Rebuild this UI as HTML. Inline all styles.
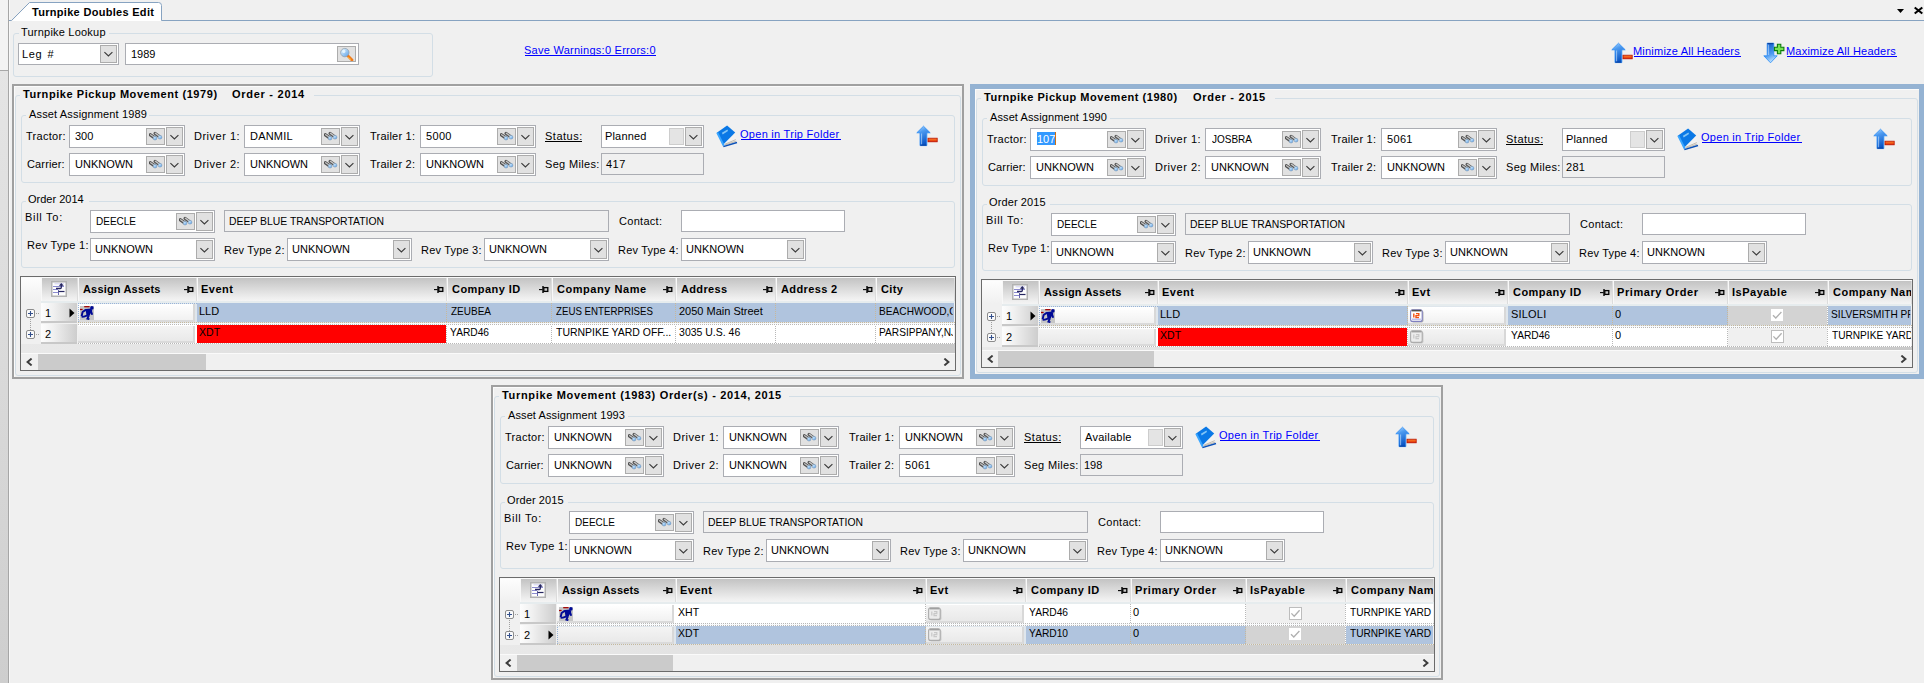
<!DOCTYPE html>
<html><head><meta charset="utf-8"><title>Turnpike Doubles Edit</title><style>
html,body{margin:0;padding:0;width:1924px;height:683px;overflow:hidden;background:#f0f0f0}
body{position:relative;font-family:'Liberation Sans', sans-serif;font-size:11px;line-height:13px;color:#000}
div,svg{position:absolute}
.t{white-space:nowrap}
</style></head><body><svg width="0" height="0" style="position:absolute;left:0;top:0">
<defs>
<linearGradient id="gblue" x1="0" y1="0" x2="0.3" y2="1"><stop offset="0" stop-color="#b4dcff"/><stop offset="0.35" stop-color="#4c9af0"/><stop offset="1" stop-color="#0a54c4"/></linearGradient><linearGradient id="gblued" x1="0.3" y1="1" x2="0" y2="0"><stop offset="0" stop-color="#b4dcff"/><stop offset="0.35" stop-color="#4c9af0"/><stop offset="1" stop-color="#0a54c4"/></linearGradient>
<linearGradient id="gbluev" x1="0" y1="0" x2="0" y2="1"><stop offset="0" stop-color="#8cc4f8"/><stop offset="1" stop-color="#0a58c0"/></linearGradient>
<linearGradient id="gred" x1="0" y1="0" x2="0" y2="1"><stop offset="0" stop-color="#ff8a30"/><stop offset="1" stop-color="#e02800"/></linearGradient>
<linearGradient id="glens" x1="0" y1="0" x2="1" y2="1"><stop offset="0" stop-color="#eaf8ff"/><stop offset="1" stop-color="#5aa0e8"/></linearGradient>
</defs></svg>

<div style="left:0px;top:0px;width:8px;height:70px;background:#f3f3f3"></div>
<div style="left:0px;top:70px;width:8px;height:1px;background:#a8a8a8"></div>
<div style="left:0px;top:71px;width:8px;height:612px;background:linear-gradient(#e5e5e5,#cecece)"></div>
<div style="left:8px;top:0px;width:1px;height:683px;background:#a6a6a6"></div>
<div style="left:9px;top:0px;width:1px;height:683px;background:#f8f8f8"></div>
<svg style="left:0;top:0" width="1924" height="24">
<path d="M9 21 H12 L30 2.5 H158.5 Q161.5 2.5 161.5 5.5 V21 Z" fill="#fff"/>
<path d="M9 20.5 H11.5 L29.5 2.5 H158.5 Q161.5 2.5 161.5 5.5 V20.5 H1924" fill="none" stroke="#87a3c1" stroke-width="1"/>
<path d="M1897 9 H1904 L1900.5 13 Z" fill="#000"/>
<path d="M1914.7 7.5 L1922.3 13.5 M1922.3 7.5 L1914.7 13.5" stroke="#000" stroke-width="2.1"/>
</svg>
<div class="t" style="left:32px;top:6px;font-weight:bold;letter-spacing:0.300px;">Turnpike Doubles Edit</div>
<div style="left:13px;top:33px;width:420px;height:44px;border:1px solid #d3dee6;border-radius:3px;box-sizing:border-box"></div>
<div style="left:19px;top:32px;width:90px;height:3px;background:#f0f0f0"></div>
<div class="t" style="left:21px;top:26px;letter-spacing:0.214px;">Turnpike Lookup</div>
<div style="left:18px;top:43px;width:101px;height:22px;background:#fff;border:1px solid #abadb3;box-sizing:border-box"></div>
<div style="left:100px;top:45px;width:17px;height:18px;background:#e1e1e1;border:1px solid #acacac;box-sizing:border-box"></div>
<svg style="left:104px;top:51px" width="10" height="7" viewBox="0 0 10 7"><path d="M0.4 1.1 L4.4 5 L8.4 1.1" fill="none" stroke="#3a3a3a" stroke-width="1.15"/></svg>
<div class="t" style="left:22px;top:48px;letter-spacing:0.625px;word-spacing:1.5px;">Leg #</div>
<div style="left:125px;top:43px;width:234px;height:22px;background:#fff;border:1px solid #abadb3;box-sizing:border-box"></div>
<div class="t" style="left:131px;top:48px;">1989</div>
<div style="left:337px;top:46px;width:19px;height:16px;background:#e1e1e1;border:1px solid #acacac;box-sizing:border-box"></div>
<svg style="left:339px;top:47px" width="15" height="14" viewBox="0 0 15 14"><path d="M8.8 8.8 L13 13" stroke="#f07a1a" stroke-width="2.8" stroke-linecap="round"/><path d="M9.2 10.4 L12 12.6" stroke="#ffd040" stroke-width="0.8"/><circle cx="5.8" cy="5.6" r="4.2" fill="url(#glens)" stroke="#8a9aa8" stroke-width="0.7"/><circle cx="4.8" cy="4.4" r="1.6" fill="#f0fbff" opacity="0.8"/></svg>
<div class="t" style="left:524px;top:44px;color:#0000ff;letter-spacing:0.261px;">Save Warnings:0 Errors:0</div>
<div style="left:525px;top:55px;width:131px;height:1px;background:#0000ff"></div>
<svg style="left:1610px;top:42px" width="24" height="22" viewBox="0 0 24 22"><path d="M8.5 1.2 L15.2 7.8 H11.8 V20.6 H5 V7.8 H1.8 Z" fill="url(#gblue)" stroke="#2a8cf6" stroke-width="0.8"/><path d="M6.6 8.5 V19.5" stroke="#c8e4ff" stroke-width="0.9" opacity="0.7"/><path d="M5.4 20.2 H11.4" stroke="#0840a0" stroke-width="1.1"/><rect x="13" y="13.2" width="9.2" height="3.6" fill="url(#gred)" stroke="#b81000" stroke-width="0.8"/></svg>
<div class="t" style="left:1633px;top:45px;color:#0000ff;letter-spacing:0.211px;">Minimize All Headers</div>
<div style="left:1634px;top:56px;width:107px;height:1px;background:#0000ff"></div>
<svg style="left:1762px;top:42px" width="24" height="22" viewBox="0 0 24 22"><path d="M5.2 1.2 H11.8 V13.8 H15.2 L8.5 20.8 L1.8 13.8 H5.2 Z" fill="url(#gblued)" stroke="#2a8cf6" stroke-width="0.8"/><path d="M6.6 2.5 V13" stroke="#c8e4ff" stroke-width="0.9" opacity="0.7"/><path d="M5.4 1.6 H11.4" stroke="#0840a0" stroke-width="1.1"/><path d="M15.4 2.2 H18.8 V5.2 H21.9 V8.6 H18.8 V11.7 H15.4 V8.6 H12.4 V5.2 H15.4 Z" fill="#78e254" stroke="#0a7c0a" stroke-width="1.1"/></svg>
<div class="t" style="left:1786px;top:45px;color:#0000ff;letter-spacing:0.211px;">Maximize All Headers</div>
<div style="left:1787px;top:56px;width:110px;height:1px;background:#0000ff"></div>
<div style="left:12px;top:84px;width:952px;height:295px;border:2px solid #a0a0a0;box-sizing:border-box"></div>
<div style="left:14px;top:86px;width:948px;height:291px;border-left:1px solid #fbfbfb;border-top:1px solid #fbfbfb;box-sizing:border-box"></div>
<div style="left:15px;top:95px;width:946px;height:281px;border:1px solid #d3dee6;border-radius:3px;box-sizing:border-box"></div>
<div style="left:20px;top:94px;width:294px;height:3px;background:#f0f0f0"></div>
<div class="t" style="left:23px;top:88px;font-weight:bold;letter-spacing:0.567px;">Turnpike Pickup Movement (1979)</div>
<div class="t" style="left:232px;top:88px;font-weight:bold;letter-spacing:0.727px;">Order - 2014</div>
<div style="left:21px;top:115px;width:934px;height:68px;border:1px solid #d3dee6;border-radius:3px;box-sizing:border-box"></div>
<div style="left:26px;top:114px;width:123px;height:3px;background:#f0f0f0"></div>
<div class="t" style="left:29px;top:108px;letter-spacing:0.150px;">Asset Assignment 1989</div>
<div class="t" style="left:26px;top:130px;letter-spacing:0.286px;">Tractor:</div>
<div style="left:69px;top:125px;width:116px;height:23px;background:#fff;border:1px solid #abadb3;box-sizing:border-box"></div>
<div style="left:166px;top:127px;width:17px;height:19px;background:#e1e1e1;border:1px solid #acacac;box-sizing:border-box"></div>
<svg style="left:170px;top:134px" width="10" height="7" viewBox="0 0 10 7"><path d="M0.4 1.1 L4.4 5 L8.4 1.1" fill="none" stroke="#3a3a3a" stroke-width="1.15"/></svg>
<div style="left:146px;top:128px;width:19px;height:17px;background:#e1e1e1;border:1px solid #acacac;box-sizing:border-box"></div>
<svg style="left:149px;top:131px" width="14" height="11" viewBox="0 0 14 11"><path d="M1.4 3.8 L5.4 6.6" stroke="#505050" stroke-width="3.3" stroke-linecap="round"/><path d="M6.1 2.5 L10.3 5.5" stroke="#585858" stroke-width="3.3" stroke-linecap="round"/><path d="M1.6 3.7 L5 6.1" stroke="#c4c4c4" stroke-width="1.2" stroke-linecap="round"/><path d="M6.4 2.3 L9.8 4.8" stroke="#cccccc" stroke-width="1.2" stroke-linecap="round"/><circle cx="6" cy="7.1" r="1.9" fill="url(#glens)" stroke="#6a8cae" stroke-width="0.5"/><circle cx="11" cy="6.2" r="1.9" fill="url(#glens)" stroke="#6a8cae" stroke-width="0.5"/></svg>
<div class="t" style="left:75px;top:130px;">300</div>
<div class="t" style="left:194px;top:130px;letter-spacing:0.500px;">Driver 1:</div>
<div style="left:244px;top:125px;width:116px;height:23px;background:#fff;border:1px solid #abadb3;box-sizing:border-box"></div>
<div style="left:341px;top:127px;width:17px;height:19px;background:#e1e1e1;border:1px solid #acacac;box-sizing:border-box"></div>
<svg style="left:345px;top:134px" width="10" height="7" viewBox="0 0 10 7"><path d="M0.4 1.1 L4.4 5 L8.4 1.1" fill="none" stroke="#3a3a3a" stroke-width="1.15"/></svg>
<div style="left:321px;top:128px;width:19px;height:17px;background:#e1e1e1;border:1px solid #acacac;box-sizing:border-box"></div>
<svg style="left:324px;top:131px" width="14" height="11" viewBox="0 0 14 11"><path d="M1.4 3.8 L5.4 6.6" stroke="#505050" stroke-width="3.3" stroke-linecap="round"/><path d="M6.1 2.5 L10.3 5.5" stroke="#585858" stroke-width="3.3" stroke-linecap="round"/><path d="M1.6 3.7 L5 6.1" stroke="#c4c4c4" stroke-width="1.2" stroke-linecap="round"/><path d="M6.4 2.3 L9.8 4.8" stroke="#cccccc" stroke-width="1.2" stroke-linecap="round"/><circle cx="6" cy="7.1" r="1.9" fill="url(#glens)" stroke="#6a8cae" stroke-width="0.5"/><circle cx="11" cy="6.2" r="1.9" fill="url(#glens)" stroke="#6a8cae" stroke-width="0.5"/></svg>
<div class="t" style="left:250px;top:130px;letter-spacing:0.200px;">DANMIL</div>
<div class="t" style="left:370px;top:130px;letter-spacing:0.222px;">Trailer 1:</div>
<div style="left:420px;top:125px;width:116px;height:23px;background:#fff;border:1px solid #abadb3;box-sizing:border-box"></div>
<div style="left:517px;top:127px;width:17px;height:19px;background:#e1e1e1;border:1px solid #acacac;box-sizing:border-box"></div>
<svg style="left:521px;top:134px" width="10" height="7" viewBox="0 0 10 7"><path d="M0.4 1.1 L4.4 5 L8.4 1.1" fill="none" stroke="#3a3a3a" stroke-width="1.15"/></svg>
<div style="left:497px;top:128px;width:19px;height:17px;background:#e1e1e1;border:1px solid #acacac;box-sizing:border-box"></div>
<svg style="left:500px;top:131px" width="14" height="11" viewBox="0 0 14 11"><path d="M1.4 3.8 L5.4 6.6" stroke="#505050" stroke-width="3.3" stroke-linecap="round"/><path d="M6.1 2.5 L10.3 5.5" stroke="#585858" stroke-width="3.3" stroke-linecap="round"/><path d="M1.6 3.7 L5 6.1" stroke="#c4c4c4" stroke-width="1.2" stroke-linecap="round"/><path d="M6.4 2.3 L9.8 4.8" stroke="#cccccc" stroke-width="1.2" stroke-linecap="round"/><circle cx="6" cy="7.1" r="1.9" fill="url(#glens)" stroke="#6a8cae" stroke-width="0.5"/><circle cx="11" cy="6.2" r="1.9" fill="url(#glens)" stroke="#6a8cae" stroke-width="0.5"/></svg>
<div class="t" style="left:426px;top:130px;letter-spacing:0.333px;">5000</div>
<div class="t" style="left:545px;top:130px;letter-spacing:0.500px;">Status:</div>
<div style="left:545px;top:141px;width:37px;height:1px;background:#000"></div>
<div style="left:601px;top:125px;width:103px;height:23px;background:#fff;border:1px solid #abadb3;box-sizing:border-box"></div>
<div style="left:685px;top:127px;width:17px;height:19px;background:#e1e1e1;border:1px solid #acacac;box-sizing:border-box"></div>
<svg style="left:689px;top:134px" width="10" height="7" viewBox="0 0 10 7"><path d="M0.4 1.1 L4.4 5 L8.4 1.1" fill="none" stroke="#3a3a3a" stroke-width="1.15"/></svg>
<div style="left:669px;top:128px;width:15px;height:17px;background:#e4e4e4;border:1px solid #cdcdcd;box-sizing:border-box"></div>
<div class="t" style="left:605px;top:130px;letter-spacing:0.167px;">Planned</div>
<svg style="left:715px;top:125px" width="24" height="23" viewBox="0 0 24 23"><path d="M8.4 21.4 L21.8 17.3 L21 13.6 L20 7.5 L8.2 19.4 Z" fill="#f2f2f2"/><path d="M9.5 20.2 L21.2 16.2 M10 19.2 L20.8 14.6" stroke="#b4aca0" stroke-width="0.8"/><path d="M1.8 7.7 L12.1 0.4 L20.2 7.5 L8.3 19.6 Z" fill="#0a78e6"/><path d="M2.2 7.6 L8.8 20.8" stroke="#3aa6ff" stroke-width="2"/><path d="M8.4 21.6 L22 17.5" stroke="#0a50b8" stroke-width="1.4"/><path d="M6.9 7.7 L12.4 4.4 L13 6 L7.7 9.5 Z" fill="#80c4f6"/></svg>
<div class="t" style="left:740px;top:128px;color:#0000ff;letter-spacing:0.278px;">Open in Trip Folder</div>
<div style="left:741px;top:139px;width:100px;height:1px;background:#0000ff"></div>
<svg style="left:915px;top:125px" width="24" height="22" viewBox="0 0 24 22"><path d="M8.5 1.2 L15.2 7.8 H11.8 V20.6 H5 V7.8 H1.8 Z" fill="url(#gblue)" stroke="#2a8cf6" stroke-width="0.8"/><path d="M6.6 8.5 V19.5" stroke="#c8e4ff" stroke-width="0.9" opacity="0.7"/><path d="M5.4 20.2 H11.4" stroke="#0840a0" stroke-width="1.1"/><rect x="13" y="13.2" width="9.2" height="3.6" fill="url(#gred)" stroke="#b81000" stroke-width="0.8"/></svg>
<div class="t" style="left:27px;top:158px;letter-spacing:0.143px;">Carrier:</div>
<div style="left:69px;top:153px;width:116px;height:23px;background:#fff;border:1px solid #abadb3;box-sizing:border-box"></div>
<div style="left:166px;top:155px;width:17px;height:19px;background:#e1e1e1;border:1px solid #acacac;box-sizing:border-box"></div>
<svg style="left:170px;top:162px" width="10" height="7" viewBox="0 0 10 7"><path d="M0.4 1.1 L4.4 5 L8.4 1.1" fill="none" stroke="#3a3a3a" stroke-width="1.15"/></svg>
<div style="left:146px;top:156px;width:19px;height:17px;background:#e1e1e1;border:1px solid #acacac;box-sizing:border-box"></div>
<svg style="left:149px;top:159px" width="14" height="11" viewBox="0 0 14 11"><path d="M1.4 3.8 L5.4 6.6" stroke="#505050" stroke-width="3.3" stroke-linecap="round"/><path d="M6.1 2.5 L10.3 5.5" stroke="#585858" stroke-width="3.3" stroke-linecap="round"/><path d="M1.6 3.7 L5 6.1" stroke="#c4c4c4" stroke-width="1.2" stroke-linecap="round"/><path d="M6.4 2.3 L9.8 4.8" stroke="#cccccc" stroke-width="1.2" stroke-linecap="round"/><circle cx="6" cy="7.1" r="1.9" fill="url(#glens)" stroke="#6a8cae" stroke-width="0.5"/><circle cx="11" cy="6.2" r="1.9" fill="url(#glens)" stroke="#6a8cae" stroke-width="0.5"/></svg>
<div class="t" style="left:75px;top:158px;">UNKNOWN</div>
<div class="t" style="left:194px;top:158px;letter-spacing:0.500px;">Driver 2:</div>
<div style="left:244px;top:153px;width:116px;height:23px;background:#fff;border:1px solid #abadb3;box-sizing:border-box"></div>
<div style="left:341px;top:155px;width:17px;height:19px;background:#e1e1e1;border:1px solid #acacac;box-sizing:border-box"></div>
<svg style="left:345px;top:162px" width="10" height="7" viewBox="0 0 10 7"><path d="M0.4 1.1 L4.4 5 L8.4 1.1" fill="none" stroke="#3a3a3a" stroke-width="1.15"/></svg>
<div style="left:321px;top:156px;width:19px;height:17px;background:#e1e1e1;border:1px solid #acacac;box-sizing:border-box"></div>
<svg style="left:324px;top:159px" width="14" height="11" viewBox="0 0 14 11"><path d="M1.4 3.8 L5.4 6.6" stroke="#505050" stroke-width="3.3" stroke-linecap="round"/><path d="M6.1 2.5 L10.3 5.5" stroke="#585858" stroke-width="3.3" stroke-linecap="round"/><path d="M1.6 3.7 L5 6.1" stroke="#c4c4c4" stroke-width="1.2" stroke-linecap="round"/><path d="M6.4 2.3 L9.8 4.8" stroke="#cccccc" stroke-width="1.2" stroke-linecap="round"/><circle cx="6" cy="7.1" r="1.9" fill="url(#glens)" stroke="#6a8cae" stroke-width="0.5"/><circle cx="11" cy="6.2" r="1.9" fill="url(#glens)" stroke="#6a8cae" stroke-width="0.5"/></svg>
<div class="t" style="left:250px;top:158px;">UNKNOWN</div>
<div class="t" style="left:370px;top:158px;letter-spacing:0.222px;">Trailer 2:</div>
<div style="left:420px;top:153px;width:116px;height:23px;background:#fff;border:1px solid #abadb3;box-sizing:border-box"></div>
<div style="left:517px;top:155px;width:17px;height:19px;background:#e1e1e1;border:1px solid #acacac;box-sizing:border-box"></div>
<svg style="left:521px;top:162px" width="10" height="7" viewBox="0 0 10 7"><path d="M0.4 1.1 L4.4 5 L8.4 1.1" fill="none" stroke="#3a3a3a" stroke-width="1.15"/></svg>
<div style="left:497px;top:156px;width:19px;height:17px;background:#e1e1e1;border:1px solid #acacac;box-sizing:border-box"></div>
<svg style="left:500px;top:159px" width="14" height="11" viewBox="0 0 14 11"><path d="M1.4 3.8 L5.4 6.6" stroke="#505050" stroke-width="3.3" stroke-linecap="round"/><path d="M6.1 2.5 L10.3 5.5" stroke="#585858" stroke-width="3.3" stroke-linecap="round"/><path d="M1.6 3.7 L5 6.1" stroke="#c4c4c4" stroke-width="1.2" stroke-linecap="round"/><path d="M6.4 2.3 L9.8 4.8" stroke="#cccccc" stroke-width="1.2" stroke-linecap="round"/><circle cx="6" cy="7.1" r="1.9" fill="url(#glens)" stroke="#6a8cae" stroke-width="0.5"/><circle cx="11" cy="6.2" r="1.9" fill="url(#glens)" stroke="#6a8cae" stroke-width="0.5"/></svg>
<div class="t" style="left:426px;top:158px;">UNKNOWN</div>
<div class="t" style="left:545px;top:158px;letter-spacing:0.333px;">Seg Miles:</div>
<div style="left:601px;top:153px;width:103px;height:22px;background:#f0f0f0;border:1px solid #abadb3;box-sizing:border-box"></div>
<div class="t" style="left:606px;top:158px;letter-spacing:0.500px;">417</div>
<div style="left:21px;top:201px;width:934px;height:67px;border:1px solid #d3dee6;border-radius:3px;box-sizing:border-box"></div>
<div style="left:26px;top:200px;width:63px;height:3px;background:#f0f0f0"></div>
<div class="t" style="left:28px;top:193px;">Order 2014</div>
<div class="t" style="left:25px;top:211px;letter-spacing:0.714px;">Bill To:</div>
<div style="left:90px;top:210px;width:125px;height:23px;background:#fff;border:1px solid #abadb3;box-sizing:border-box"></div>
<div style="left:196px;top:212px;width:17px;height:19px;background:#e1e1e1;border:1px solid #acacac;box-sizing:border-box"></div>
<svg style="left:200px;top:219px" width="10" height="7" viewBox="0 0 10 7"><path d="M0.4 1.1 L4.4 5 L8.4 1.1" fill="none" stroke="#3a3a3a" stroke-width="1.15"/></svg>
<div style="left:176px;top:213px;width:19px;height:17px;background:#e1e1e1;border:1px solid #acacac;box-sizing:border-box"></div>
<svg style="left:179px;top:216px" width="14" height="11" viewBox="0 0 14 11"><path d="M1.4 3.8 L5.4 6.6" stroke="#505050" stroke-width="3.3" stroke-linecap="round"/><path d="M6.1 2.5 L10.3 5.5" stroke="#585858" stroke-width="3.3" stroke-linecap="round"/><path d="M1.6 3.7 L5 6.1" stroke="#c4c4c4" stroke-width="1.2" stroke-linecap="round"/><path d="M6.4 2.3 L9.8 4.8" stroke="#cccccc" stroke-width="1.2" stroke-linecap="round"/><circle cx="6" cy="7.1" r="1.9" fill="url(#glens)" stroke="#6a8cae" stroke-width="0.5"/><circle cx="11" cy="6.2" r="1.9" fill="url(#glens)" stroke="#6a8cae" stroke-width="0.5"/></svg>
<div class="t" style="left:96px;top:215px;transform:scaleX(0.9070);transform-origin:1px 0;">DEECLE</div>
<div style="left:224px;top:210px;width:385px;height:22px;background:#f0f0f0;border:1px solid #abadb3;box-sizing:border-box"></div>
<div class="t" style="left:229px;top:215px;transform:scaleX(0.9444);transform-origin:1px 0;">DEEP BLUE TRANSPORTATION</div>
<div class="t" style="left:619px;top:215px;letter-spacing:0.286px;">Contact:</div>
<div style="left:681px;top:210px;width:164px;height:22px;background:#fff;border:1px solid #abadb3;box-sizing:border-box"></div>
<div class="t" style="left:27px;top:239px;letter-spacing:0.300px;">Rev Type 1:</div>
<div style="left:90px;top:238px;width:125px;height:23px;background:#fff;border:1px solid #abadb3;box-sizing:border-box"></div>
<div style="left:196px;top:240px;width:17px;height:19px;background:#e1e1e1;border:1px solid #acacac;box-sizing:border-box"></div>
<svg style="left:200px;top:247px" width="10" height="7" viewBox="0 0 10 7"><path d="M0.4 1.1 L4.4 5 L8.4 1.1" fill="none" stroke="#3a3a3a" stroke-width="1.15"/></svg>
<div class="t" style="left:95px;top:243px;">UNKNOWN</div>
<div class="t" style="left:224px;top:244px;letter-spacing:0.200px;">Rev Type 2:</div>
<div style="left:287px;top:238px;width:125px;height:23px;background:#fff;border:1px solid #abadb3;box-sizing:border-box"></div>
<div style="left:393px;top:240px;width:17px;height:19px;background:#e1e1e1;border:1px solid #acacac;box-sizing:border-box"></div>
<svg style="left:397px;top:247px" width="10" height="7" viewBox="0 0 10 7"><path d="M0.4 1.1 L4.4 5 L8.4 1.1" fill="none" stroke="#3a3a3a" stroke-width="1.15"/></svg>
<div class="t" style="left:292px;top:243px;">UNKNOWN</div>
<div class="t" style="left:421px;top:244px;letter-spacing:0.200px;">Rev Type 3:</div>
<div style="left:484px;top:238px;width:125px;height:23px;background:#fff;border:1px solid #abadb3;box-sizing:border-box"></div>
<div style="left:590px;top:240px;width:17px;height:19px;background:#e1e1e1;border:1px solid #acacac;box-sizing:border-box"></div>
<svg style="left:594px;top:247px" width="10" height="7" viewBox="0 0 10 7"><path d="M0.4 1.1 L4.4 5 L8.4 1.1" fill="none" stroke="#3a3a3a" stroke-width="1.15"/></svg>
<div class="t" style="left:489px;top:243px;">UNKNOWN</div>
<div class="t" style="left:618px;top:244px;letter-spacing:0.200px;">Rev Type 4:</div>
<div style="left:681px;top:238px;width:125px;height:23px;background:#fff;border:1px solid #abadb3;box-sizing:border-box"></div>
<div style="left:787px;top:240px;width:17px;height:19px;background:#e1e1e1;border:1px solid #acacac;box-sizing:border-box"></div>
<svg style="left:791px;top:247px" width="10" height="7" viewBox="0 0 10 7"><path d="M0.4 1.1 L4.4 5 L8.4 1.1" fill="none" stroke="#3a3a3a" stroke-width="1.15"/></svg>
<div class="t" style="left:686px;top:243px;">UNKNOWN</div>
<div style="left:20px;top:276px;width:936px;height:95px;border:1px solid #6b6b6b;box-sizing:border-box;background:#f0f0f0"></div>
<div style="left:21px;top:277px;width:934px;height:1px;background:#fafafa"></div>
<div style="left:21px;top:278px;width:20px;height:23px;background:linear-gradient(#fdfdfd,#f0f0f0)"></div>
<div style="left:41px;top:278px;width:37px;height:23px;background:linear-gradient(#c3c3c3,#eeeeee 85%,#f4f4f4);border-left:1px solid #f8f8f8;border-right:1px solid #dcdcdc;box-sizing:border-box"></div>
<svg style="left:51px;top:281px" width="16" height="16" viewBox="0 0 16 16"><rect x="0.75" y="0.75" width="14.5" height="14.5" fill="#fdfdfd" stroke="#b2b2b2" stroke-width="1.5"/><path d="M3.5 2.8 H13" stroke="#d0d0f0" stroke-width="1"/><path d="M2 5.5 H13 M2 8.5 H7 M2 11.5 H7" stroke="#8c8cd0" stroke-width="1"/><path d="M7.5 9 V14" stroke="#6a6ab0" stroke-width="1"/><path d="M7.5 10.5 H13.5" stroke="#262660" stroke-width="1.2"/><path d="M5 7.5 H9.3 Q10.3 7.5 10.3 6.5 V4" fill="none" stroke="#262660" stroke-width="1.3"/><path d="M7.8 4.8 L10.3 2 L12.8 4.8 Z" fill="#262660"/></svg>
<div style="left:78px;top:278px;width:119px;height:23px;background:linear-gradient(#c3c3c3,#eeeeee 85%,#f4f4f4);border-left:1px solid #f8f8f8;border-right:1px solid #dcdcdc;box-sizing:border-box"></div>
<div class="t" style="left:83px;top:283px;font-weight:bold;letter-spacing:0.167px;">Assign Assets</div>
<svg style="left:184px;top:286px" width="10" height="8" viewBox="0 0 10 8"><path d="M0 3.6 H3.6" stroke="#000" stroke-width="1.1"/><path d="M4 0 V7" stroke="#000" stroke-width="1.4"/><rect x="4.8" y="1.6" width="4" height="3.8" fill="#c8c8c8" stroke="#000" stroke-width="1.3"/></svg>
<div style="left:197px;top:278px;width:250px;height:23px;background:linear-gradient(#c3c3c3,#eeeeee 85%,#f4f4f4);border-left:1px solid #f8f8f8;border-right:1px solid #dcdcdc;box-sizing:border-box"></div>
<div class="t" style="left:201px;top:283px;font-weight:bold;letter-spacing:0.500px;">Event</div>
<svg style="left:434px;top:286px" width="10" height="8" viewBox="0 0 10 8"><path d="M0 3.6 H3.6" stroke="#000" stroke-width="1.1"/><path d="M4 0 V7" stroke="#000" stroke-width="1.4"/><rect x="4.8" y="1.6" width="4" height="3.8" fill="#c8c8c8" stroke="#000" stroke-width="1.3"/></svg>
<div style="left:447px;top:278px;width:105px;height:23px;background:linear-gradient(#c3c3c3,#eeeeee 85%,#f4f4f4);border-left:1px solid #f8f8f8;border-right:1px solid #dcdcdc;box-sizing:border-box"></div>
<div class="t" style="left:452px;top:283px;font-weight:bold;letter-spacing:0.444px;">Company ID</div>
<svg style="left:539px;top:286px" width="10" height="8" viewBox="0 0 10 8"><path d="M0 3.6 H3.6" stroke="#000" stroke-width="1.1"/><path d="M4 0 V7" stroke="#000" stroke-width="1.4"/><rect x="4.8" y="1.6" width="4" height="3.8" fill="#c8c8c8" stroke="#000" stroke-width="1.3"/></svg>
<div style="left:552px;top:278px;width:124px;height:23px;background:linear-gradient(#c3c3c3,#eeeeee 85%,#f4f4f4);border-left:1px solid #f8f8f8;border-right:1px solid #dcdcdc;box-sizing:border-box"></div>
<div class="t" style="left:557px;top:283px;font-weight:bold;letter-spacing:0.545px;">Company Name</div>
<svg style="left:663px;top:286px" width="10" height="8" viewBox="0 0 10 8"><path d="M0 3.6 H3.6" stroke="#000" stroke-width="1.1"/><path d="M4 0 V7" stroke="#000" stroke-width="1.4"/><rect x="4.8" y="1.6" width="4" height="3.8" fill="#c8c8c8" stroke="#000" stroke-width="1.3"/></svg>
<div style="left:676px;top:278px;width:100px;height:23px;background:linear-gradient(#c3c3c3,#eeeeee 85%,#f4f4f4);border-left:1px solid #f8f8f8;border-right:1px solid #dcdcdc;box-sizing:border-box"></div>
<div class="t" style="left:681px;top:283px;font-weight:bold;letter-spacing:0.333px;">Address</div>
<svg style="left:763px;top:286px" width="10" height="8" viewBox="0 0 10 8"><path d="M0 3.6 H3.6" stroke="#000" stroke-width="1.1"/><path d="M4 0 V7" stroke="#000" stroke-width="1.4"/><rect x="4.8" y="1.6" width="4" height="3.8" fill="#c8c8c8" stroke="#000" stroke-width="1.3"/></svg>
<div style="left:776px;top:278px;width:100px;height:23px;background:linear-gradient(#c3c3c3,#eeeeee 85%,#f4f4f4);border-left:1px solid #f8f8f8;border-right:1px solid #dcdcdc;box-sizing:border-box"></div>
<div class="t" style="left:781px;top:283px;font-weight:bold;letter-spacing:0.375px;">Address 2</div>
<svg style="left:863px;top:286px" width="10" height="8" viewBox="0 0 10 8"><path d="M0 3.6 H3.6" stroke="#000" stroke-width="1.1"/><path d="M4 0 V7" stroke="#000" stroke-width="1.4"/><rect x="4.8" y="1.6" width="4" height="3.8" fill="#c8c8c8" stroke="#000" stroke-width="1.3"/></svg>
<div style="left:876px;top:278px;width:79px;height:23px;background:linear-gradient(#c3c3c3,#eeeeee 85%,#f4f4f4);border-left:1px solid #f8f8f8;border-right:1px solid #dcdcdc;box-sizing:border-box"></div>
<div class="t" style="left:881px;top:283px;font-weight:bold;letter-spacing:0.333px;width:73.0px;overflow:hidden;">City</div>
<div style="left:41px;top:301px;width:914px;height:2px;background:#e6ecee"></div>
<svg style="left:26px;top:309px" width="9" height="9" viewBox="0 0 9 9"><rect x="0.5" y="0.5" width="8" height="8" rx="1.5" fill="#fafafa" stroke="#8c8c8c"/><path d="M2 4.5 H7 M4.5 2 V7" stroke="#34508c" stroke-width="1.1"/></svg>
<div style="left:36px;top:313px;width:4px;height:1px;background:repeating-linear-gradient(to right,#a0a0a0 0 1px,transparent 1px 2px)"></div>
<div style="left:30px;top:319px;width:1px;height:11px;background:repeating-linear-gradient(#a0a0a0 0 1px,transparent 1px 2px)"></div>
<div style="left:41px;top:303px;width:36px;height:20px;background:linear-gradient(to right,#fdfdfd,#f0f0f0 35%,#cdcdcd);border-bottom:2px solid #c8c8c8;box-sizing:border-box"></div>
<div class="t" style="left:45px;top:307px;">1</div>
<svg style="left:69px;top:308px" width="6" height="10" viewBox="0 0 6 10"><path d="M0.5 0.5 L5.5 5 L0.5 9.5 Z" fill="#000"/></svg>
<div style="left:78px;top:303px;width:119px;height:20px;background:#dfe6ec"></div>
<div style="left:78px;top:304px;width:117px;height:18px;background:linear-gradient(#ffffff,#f1f1f1);border-right:2px solid #d8d8d8;border-bottom:2px solid #dadada;box-sizing:border-box"></div>
<svg style="left:80px;top:306px" width="14" height="14" viewBox="0 0 14 14"><rect x="0" y="0" width="14" height="14" fill="#c6c6c6"/><path d="M4.2 0.7 H9.6" stroke="#a00000" stroke-width="1.3"/><path d="M0 3.5 H2.6" stroke="#a00000" stroke-width="1.3"/><rect x="1" y="6" width="2" height="2" fill="#e0a0a0"/><circle cx="11.9" cy="1.9" r="1.8" fill="#000a96"/><path d="M5.4 3 L11 2.4 L12.3 4.2 L9.4 9.9 L6.6 9.7 Z" fill="#000a96"/><path d="M6 3.6 L2.6 6 L1.6 10.2 M10.8 4.4 L12.2 8.8 M7.6 9.3 L4 10.6 L1.6 10.8 M8.8 9.6 L7.4 12.6 L9.4 13.2" fill="none" stroke="#000a96" stroke-width="1.9"/></svg>
<div style="left:78px;top:303px;width:119px;height:1px;background:repeating-linear-gradient(to right,#98b4d8 0 1px,transparent 1px 2px)"></div>
<div style="left:78px;top:303px;width:1px;height:20px;background:repeating-linear-gradient(#98b4d8 0 1px,transparent 1px 2px)"></div>
<div style="left:197px;top:303px;width:249px;height:19px;background:#b0c4de"></div>
<div style="left:446px;top:303px;width:1px;height:20px;background:repeating-linear-gradient(#c8b89a 0 1px,#b0c4de 1px 2px)"></div>
<div class="t" style="left:199px;top:305px;">LLD</div>
<div style="left:447px;top:303px;width:104px;height:19px;background:#b0c4de"></div>
<div style="left:551px;top:303px;width:1px;height:20px;background:repeating-linear-gradient(#c8b89a 0 1px,#b0c4de 1px 2px)"></div>
<div class="t" style="left:451px;top:305px;transform:scaleX(0.9091);transform-origin:0px 0;">ZEUBEA</div>
<div style="left:552px;top:303px;width:123px;height:19px;background:#b0c4de"></div>
<div style="left:675px;top:303px;width:1px;height:20px;background:repeating-linear-gradient(#c8b89a 0 1px,#b0c4de 1px 2px)"></div>
<div class="t" style="left:556px;top:305px;transform:scaleX(0.8818);transform-origin:0px 0;">ZEUS ENTERPRISES</div>
<div style="left:676px;top:303px;width:99px;height:19px;background:#b0c4de"></div>
<div style="left:775px;top:303px;width:1px;height:20px;background:repeating-linear-gradient(#c8b89a 0 1px,#b0c4de 1px 2px)"></div>
<div class="t" style="left:679px;top:305px;">2050 Main Street</div>
<div style="left:776px;top:303px;width:99px;height:19px;background:#b0c4de"></div>
<div style="left:875px;top:303px;width:1px;height:20px;background:repeating-linear-gradient(#c8b89a 0 1px,#b0c4de 1px 2px)"></div>
<div style="left:876px;top:303px;width:78px;height:19px;background:#b0c4de"></div>
<div class="t" style="left:879px;top:305px;transform:scaleX(0.9200);transform-origin:1px 0;width:80.4px;overflow:hidden;">BEACHWOOD,OH</div>
<div style="left:78px;top:322px;width:877px;height:1px;background:repeating-linear-gradient(to right,#c8b89a 0 1px,#dfe6ec 1px 2px)"></div>
<div style="left:78px;top:323px;width:877px;height:1px;background:#f8fafc"></div>
<svg style="left:26px;top:330px" width="9" height="9" viewBox="0 0 9 9"><rect x="0.5" y="0.5" width="8" height="8" rx="1.5" fill="#fafafa" stroke="#8c8c8c"/><path d="M2 4.5 H7 M4.5 2 V7" stroke="#34508c" stroke-width="1.1"/></svg>
<div style="left:36px;top:334px;width:4px;height:1px;background:repeating-linear-gradient(to right,#a0a0a0 0 1px,transparent 1px 2px)"></div>
<div style="left:41px;top:324px;width:36px;height:20px;background:linear-gradient(to right,#fdfdfd,#f0f0f0 35%,#cdcdcd);border-bottom:2px solid #c8c8c8;box-sizing:border-box"></div>
<div class="t" style="left:45px;top:328px;">2</div>
<div style="left:78px;top:324px;width:119px;height:20px;background:#ffffff"></div>
<div style="left:78px;top:326px;width:117px;height:17px;background:linear-gradient(#f4f4f4,#e9e9e9);border-right:2px solid #d8d8d8;border-bottom:2px solid #dadada;box-sizing:border-box"></div>
<div style="left:197px;top:325px;width:249px;height:18px;background:#ff0000"></div>
<div style="left:446px;top:324px;width:1px;height:20px;background:repeating-linear-gradient(#b8b8b8 0 1px,#ffffff 1px 2px)"></div>
<div class="t" style="left:199px;top:326px;transform:scaleX(0.9545);transform-origin:1px 0;">XDT</div>
<div style="left:447px;top:325px;width:104px;height:18px;background:#fff"></div>
<div style="left:551px;top:324px;width:1px;height:20px;background:repeating-linear-gradient(#b8b8b8 0 1px,#ffffff 1px 2px)"></div>
<div class="t" style="left:450px;top:326px;transform:scaleX(0.9286);transform-origin:1px 0;">YARD46</div>
<div style="left:552px;top:325px;width:123px;height:18px;background:#fff"></div>
<div style="left:675px;top:324px;width:1px;height:20px;background:repeating-linear-gradient(#b8b8b8 0 1px,#ffffff 1px 2px)"></div>
<div class="t" style="left:556px;top:326px;transform:scaleX(0.9504);transform-origin:0px 0;">TURNPIKE YARD OFF...</div>
<div style="left:676px;top:325px;width:99px;height:18px;background:#fff"></div>
<div style="left:775px;top:324px;width:1px;height:20px;background:repeating-linear-gradient(#b8b8b8 0 1px,#ffffff 1px 2px)"></div>
<div class="t" style="left:679px;top:326px;transform:scaleX(0.9531);transform-origin:1px 0;">3035 U.S. 46</div>
<div style="left:776px;top:325px;width:99px;height:18px;background:#fff"></div>
<div style="left:875px;top:324px;width:1px;height:20px;background:repeating-linear-gradient(#b8b8b8 0 1px,#ffffff 1px 2px)"></div>
<div style="left:876px;top:325px;width:78px;height:18px;background:#fff"></div>
<div class="t" style="left:879px;top:326px;transform:scaleX(0.9200);transform-origin:1px 0;width:80.4px;overflow:hidden;">PARSIPPANY,NJ</div>
<div style="left:78px;top:343px;width:877px;height:1px;background:repeating-linear-gradient(to right,#b8b8b8 0 1px,#ffffff 1px 2px)"></div>
<div style="left:78px;top:324px;width:877px;height:1px;background:repeating-linear-gradient(to right,#b8b8b8 0 1px,#ffffff 1px 2px)"></div>
<div style="left:21px;top:344px;width:934px;height:9px;background:linear-gradient(to right,#e9e9e9,#c9c9c9)"></div>
<div style="left:21px;top:353px;width:934px;height:1px;background:#fafafa"></div>
<div style="left:21px;top:354px;width:934px;height:16px;background:#f0f0f0"></div>
<div style="left:38px;top:354px;width:168px;height:16px;background:#cbcbcb"></div>
<svg style="left:26px;top:358px" width="7" height="8" viewBox="0 0 7 8"><path d="M5.6 0.6 L1.6 4 L5.6 7.4" fill="none" stroke="#3c3c3c" stroke-width="2"/></svg>
<svg style="left:943px;top:358px" width="7" height="8" viewBox="0 0 7 8"><path d="M1.4 0.6 L5.4 4 L1.4 7.4" fill="none" stroke="#3c3c3c" stroke-width="2"/></svg>
<div style="left:970px;top:84px;width:954px;height:295px;border:5px solid #95b3d3;box-sizing:border-box"></div>
<div style="left:975px;top:89px;width:944px;height:284px;border-left:1px solid #fbfbfb;border-top:1px solid #fbfbfb;box-sizing:border-box"></div>
<div style="left:976px;top:98px;width:942px;height:275px;border:1px solid #d3dee6;border-radius:3px;box-sizing:border-box"></div>
<div style="left:981px;top:97px;width:294px;height:3px;background:#f0f0f0"></div>
<div class="t" style="left:984px;top:91px;font-weight:bold;letter-spacing:0.533px;">Turnpike Pickup Movement (1980)</div>
<div class="t" style="left:1193px;top:91px;font-weight:bold;letter-spacing:0.727px;">Order - 2015</div>
<div style="left:982px;top:118px;width:930px;height:68px;border:1px solid #d3dee6;border-radius:3px;box-sizing:border-box"></div>
<div style="left:987px;top:117px;width:123px;height:3px;background:#f0f0f0"></div>
<div class="t" style="left:990px;top:111px;letter-spacing:0.100px;">Asset Assignment 1990</div>
<div class="t" style="left:987px;top:133px;letter-spacing:0.286px;">Tractor:</div>
<div style="left:1030px;top:128px;width:116px;height:23px;background:#fff;border:1px solid #abadb3;box-sizing:border-box"></div>
<div style="left:1127px;top:130px;width:17px;height:19px;background:#e1e1e1;border:1px solid #acacac;box-sizing:border-box"></div>
<svg style="left:1131px;top:137px" width="10" height="7" viewBox="0 0 10 7"><path d="M0.4 1.1 L4.4 5 L8.4 1.1" fill="none" stroke="#3a3a3a" stroke-width="1.15"/></svg>
<div style="left:1107px;top:131px;width:19px;height:17px;background:#e1e1e1;border:1px solid #acacac;box-sizing:border-box"></div>
<svg style="left:1110px;top:134px" width="14" height="11" viewBox="0 0 14 11"><path d="M1.4 3.8 L5.4 6.6" stroke="#505050" stroke-width="3.3" stroke-linecap="round"/><path d="M6.1 2.5 L10.3 5.5" stroke="#585858" stroke-width="3.3" stroke-linecap="round"/><path d="M1.6 3.7 L5 6.1" stroke="#c4c4c4" stroke-width="1.2" stroke-linecap="round"/><path d="M6.4 2.3 L9.8 4.8" stroke="#cccccc" stroke-width="1.2" stroke-linecap="round"/><circle cx="6" cy="7.1" r="1.9" fill="url(#glens)" stroke="#6a8cae" stroke-width="0.5"/><circle cx="11" cy="6.2" r="1.9" fill="url(#glens)" stroke="#6a8cae" stroke-width="0.5"/></svg>
<div style="left:1037px;top:132px;width:19px;height:13px;background:#3399ff"></div>
<div style="left:1055px;top:132px;width:1px;height:13px;background:#d07010"></div>
<div class="t" style="left:1037px;top:133px;color:#fff;">107</div>
<div class="t" style="left:1155px;top:133px;letter-spacing:0.500px;">Driver 1:</div>
<div style="left:1205px;top:128px;width:116px;height:23px;background:#fff;border:1px solid #abadb3;box-sizing:border-box"></div>
<div style="left:1302px;top:130px;width:17px;height:19px;background:#e1e1e1;border:1px solid #acacac;box-sizing:border-box"></div>
<svg style="left:1306px;top:137px" width="10" height="7" viewBox="0 0 10 7"><path d="M0.4 1.1 L4.4 5 L8.4 1.1" fill="none" stroke="#3a3a3a" stroke-width="1.15"/></svg>
<div style="left:1282px;top:131px;width:19px;height:17px;background:#e1e1e1;border:1px solid #acacac;box-sizing:border-box"></div>
<svg style="left:1285px;top:134px" width="14" height="11" viewBox="0 0 14 11"><path d="M1.4 3.8 L5.4 6.6" stroke="#505050" stroke-width="3.3" stroke-linecap="round"/><path d="M6.1 2.5 L10.3 5.5" stroke="#585858" stroke-width="3.3" stroke-linecap="round"/><path d="M1.6 3.7 L5 6.1" stroke="#c4c4c4" stroke-width="1.2" stroke-linecap="round"/><path d="M6.4 2.3 L9.8 4.8" stroke="#cccccc" stroke-width="1.2" stroke-linecap="round"/><circle cx="6" cy="7.1" r="1.9" fill="url(#glens)" stroke="#6a8cae" stroke-width="0.5"/><circle cx="11" cy="6.2" r="1.9" fill="url(#glens)" stroke="#6a8cae" stroke-width="0.5"/></svg>
<div class="t" style="left:1212px;top:133px;transform:scaleX(0.9091);transform-origin:0px 0;">JOSBRA</div>
<div class="t" style="left:1331px;top:133px;letter-spacing:0.222px;">Trailer 1:</div>
<div style="left:1381px;top:128px;width:116px;height:23px;background:#fff;border:1px solid #abadb3;box-sizing:border-box"></div>
<div style="left:1478px;top:130px;width:17px;height:19px;background:#e1e1e1;border:1px solid #acacac;box-sizing:border-box"></div>
<svg style="left:1482px;top:137px" width="10" height="7" viewBox="0 0 10 7"><path d="M0.4 1.1 L4.4 5 L8.4 1.1" fill="none" stroke="#3a3a3a" stroke-width="1.15"/></svg>
<div style="left:1458px;top:131px;width:19px;height:17px;background:#e1e1e1;border:1px solid #acacac;box-sizing:border-box"></div>
<svg style="left:1461px;top:134px" width="14" height="11" viewBox="0 0 14 11"><path d="M1.4 3.8 L5.4 6.6" stroke="#505050" stroke-width="3.3" stroke-linecap="round"/><path d="M6.1 2.5 L10.3 5.5" stroke="#585858" stroke-width="3.3" stroke-linecap="round"/><path d="M1.6 3.7 L5 6.1" stroke="#c4c4c4" stroke-width="1.2" stroke-linecap="round"/><path d="M6.4 2.3 L9.8 4.8" stroke="#cccccc" stroke-width="1.2" stroke-linecap="round"/><circle cx="6" cy="7.1" r="1.9" fill="url(#glens)" stroke="#6a8cae" stroke-width="0.5"/><circle cx="11" cy="6.2" r="1.9" fill="url(#glens)" stroke="#6a8cae" stroke-width="0.5"/></svg>
<div class="t" style="left:1387px;top:133px;letter-spacing:0.330px;">5061</div>
<div class="t" style="left:1506px;top:133px;letter-spacing:0.500px;">Status:</div>
<div style="left:1506px;top:144px;width:37px;height:1px;background:#000"></div>
<div style="left:1562px;top:128px;width:103px;height:23px;background:#fff;border:1px solid #abadb3;box-sizing:border-box"></div>
<div style="left:1646px;top:130px;width:17px;height:19px;background:#e1e1e1;border:1px solid #acacac;box-sizing:border-box"></div>
<svg style="left:1650px;top:137px" width="10" height="7" viewBox="0 0 10 7"><path d="M0.4 1.1 L4.4 5 L8.4 1.1" fill="none" stroke="#3a3a3a" stroke-width="1.15"/></svg>
<div style="left:1630px;top:131px;width:15px;height:17px;background:#e4e4e4;border:1px solid #cdcdcd;box-sizing:border-box"></div>
<div class="t" style="left:1566px;top:133px;letter-spacing:0.167px;">Planned</div>
<svg style="left:1676px;top:128px" width="24" height="23" viewBox="0 0 24 23"><path d="M8.4 21.4 L21.8 17.3 L21 13.6 L20 7.5 L8.2 19.4 Z" fill="#f2f2f2"/><path d="M9.5 20.2 L21.2 16.2 M10 19.2 L20.8 14.6" stroke="#b4aca0" stroke-width="0.8"/><path d="M1.8 7.7 L12.1 0.4 L20.2 7.5 L8.3 19.6 Z" fill="#0a78e6"/><path d="M2.2 7.6 L8.8 20.8" stroke="#3aa6ff" stroke-width="2"/><path d="M8.4 21.6 L22 17.5" stroke="#0a50b8" stroke-width="1.4"/><path d="M6.9 7.7 L12.4 4.4 L13 6 L7.7 9.5 Z" fill="#80c4f6"/></svg>
<div class="t" style="left:1701px;top:131px;color:#0000ff;letter-spacing:0.278px;">Open in Trip Folder</div>
<div style="left:1702px;top:142px;width:100px;height:1px;background:#0000ff"></div>
<svg style="left:1872px;top:128px" width="24" height="22" viewBox="0 0 24 22"><path d="M8.5 1.2 L15.2 7.8 H11.8 V20.6 H5 V7.8 H1.8 Z" fill="url(#gblue)" stroke="#2a8cf6" stroke-width="0.8"/><path d="M6.6 8.5 V19.5" stroke="#c8e4ff" stroke-width="0.9" opacity="0.7"/><path d="M5.4 20.2 H11.4" stroke="#0840a0" stroke-width="1.1"/><rect x="13" y="13.2" width="9.2" height="3.6" fill="url(#gred)" stroke="#b81000" stroke-width="0.8"/></svg>
<div class="t" style="left:988px;top:161px;letter-spacing:0.143px;">Carrier:</div>
<div style="left:1030px;top:156px;width:116px;height:23px;background:#fff;border:1px solid #abadb3;box-sizing:border-box"></div>
<div style="left:1127px;top:158px;width:17px;height:19px;background:#e1e1e1;border:1px solid #acacac;box-sizing:border-box"></div>
<svg style="left:1131px;top:165px" width="10" height="7" viewBox="0 0 10 7"><path d="M0.4 1.1 L4.4 5 L8.4 1.1" fill="none" stroke="#3a3a3a" stroke-width="1.15"/></svg>
<div style="left:1107px;top:159px;width:19px;height:17px;background:#e1e1e1;border:1px solid #acacac;box-sizing:border-box"></div>
<svg style="left:1110px;top:162px" width="14" height="11" viewBox="0 0 14 11"><path d="M1.4 3.8 L5.4 6.6" stroke="#505050" stroke-width="3.3" stroke-linecap="round"/><path d="M6.1 2.5 L10.3 5.5" stroke="#585858" stroke-width="3.3" stroke-linecap="round"/><path d="M1.6 3.7 L5 6.1" stroke="#c4c4c4" stroke-width="1.2" stroke-linecap="round"/><path d="M6.4 2.3 L9.8 4.8" stroke="#cccccc" stroke-width="1.2" stroke-linecap="round"/><circle cx="6" cy="7.1" r="1.9" fill="url(#glens)" stroke="#6a8cae" stroke-width="0.5"/><circle cx="11" cy="6.2" r="1.9" fill="url(#glens)" stroke="#6a8cae" stroke-width="0.5"/></svg>
<div class="t" style="left:1036px;top:161px;">UNKNOWN</div>
<div class="t" style="left:1155px;top:161px;letter-spacing:0.500px;">Driver 2:</div>
<div style="left:1205px;top:156px;width:116px;height:23px;background:#fff;border:1px solid #abadb3;box-sizing:border-box"></div>
<div style="left:1302px;top:158px;width:17px;height:19px;background:#e1e1e1;border:1px solid #acacac;box-sizing:border-box"></div>
<svg style="left:1306px;top:165px" width="10" height="7" viewBox="0 0 10 7"><path d="M0.4 1.1 L4.4 5 L8.4 1.1" fill="none" stroke="#3a3a3a" stroke-width="1.15"/></svg>
<div style="left:1282px;top:159px;width:19px;height:17px;background:#e1e1e1;border:1px solid #acacac;box-sizing:border-box"></div>
<svg style="left:1285px;top:162px" width="14" height="11" viewBox="0 0 14 11"><path d="M1.4 3.8 L5.4 6.6" stroke="#505050" stroke-width="3.3" stroke-linecap="round"/><path d="M6.1 2.5 L10.3 5.5" stroke="#585858" stroke-width="3.3" stroke-linecap="round"/><path d="M1.6 3.7 L5 6.1" stroke="#c4c4c4" stroke-width="1.2" stroke-linecap="round"/><path d="M6.4 2.3 L9.8 4.8" stroke="#cccccc" stroke-width="1.2" stroke-linecap="round"/><circle cx="6" cy="7.1" r="1.9" fill="url(#glens)" stroke="#6a8cae" stroke-width="0.5"/><circle cx="11" cy="6.2" r="1.9" fill="url(#glens)" stroke="#6a8cae" stroke-width="0.5"/></svg>
<div class="t" style="left:1211px;top:161px;">UNKNOWN</div>
<div class="t" style="left:1331px;top:161px;letter-spacing:0.222px;">Trailer 2:</div>
<div style="left:1381px;top:156px;width:116px;height:23px;background:#fff;border:1px solid #abadb3;box-sizing:border-box"></div>
<div style="left:1478px;top:158px;width:17px;height:19px;background:#e1e1e1;border:1px solid #acacac;box-sizing:border-box"></div>
<svg style="left:1482px;top:165px" width="10" height="7" viewBox="0 0 10 7"><path d="M0.4 1.1 L4.4 5 L8.4 1.1" fill="none" stroke="#3a3a3a" stroke-width="1.15"/></svg>
<div style="left:1458px;top:159px;width:19px;height:17px;background:#e1e1e1;border:1px solid #acacac;box-sizing:border-box"></div>
<svg style="left:1461px;top:162px" width="14" height="11" viewBox="0 0 14 11"><path d="M1.4 3.8 L5.4 6.6" stroke="#505050" stroke-width="3.3" stroke-linecap="round"/><path d="M6.1 2.5 L10.3 5.5" stroke="#585858" stroke-width="3.3" stroke-linecap="round"/><path d="M1.6 3.7 L5 6.1" stroke="#c4c4c4" stroke-width="1.2" stroke-linecap="round"/><path d="M6.4 2.3 L9.8 4.8" stroke="#cccccc" stroke-width="1.2" stroke-linecap="round"/><circle cx="6" cy="7.1" r="1.9" fill="url(#glens)" stroke="#6a8cae" stroke-width="0.5"/><circle cx="11" cy="6.2" r="1.9" fill="url(#glens)" stroke="#6a8cae" stroke-width="0.5"/></svg>
<div class="t" style="left:1387px;top:161px;">UNKNOWN</div>
<div class="t" style="left:1506px;top:161px;letter-spacing:0.333px;">Seg Miles:</div>
<div style="left:1562px;top:156px;width:103px;height:22px;background:#f0f0f0;border:1px solid #abadb3;box-sizing:border-box"></div>
<div class="t" style="left:1566px;top:161px;letter-spacing:0.300px;">281</div>
<div style="left:982px;top:204px;width:930px;height:67px;border:1px solid #d3dee6;border-radius:3px;box-sizing:border-box"></div>
<div style="left:987px;top:203px;width:63px;height:3px;background:#f0f0f0"></div>
<div class="t" style="left:989px;top:196px;letter-spacing:0.111px;">Order 2015</div>
<div class="t" style="left:986px;top:214px;letter-spacing:0.714px;">Bill To:</div>
<div style="left:1051px;top:213px;width:125px;height:23px;background:#fff;border:1px solid #abadb3;box-sizing:border-box"></div>
<div style="left:1157px;top:215px;width:17px;height:19px;background:#e1e1e1;border:1px solid #acacac;box-sizing:border-box"></div>
<svg style="left:1161px;top:222px" width="10" height="7" viewBox="0 0 10 7"><path d="M0.4 1.1 L4.4 5 L8.4 1.1" fill="none" stroke="#3a3a3a" stroke-width="1.15"/></svg>
<div style="left:1137px;top:216px;width:19px;height:17px;background:#e1e1e1;border:1px solid #acacac;box-sizing:border-box"></div>
<svg style="left:1140px;top:219px" width="14" height="11" viewBox="0 0 14 11"><path d="M1.4 3.8 L5.4 6.6" stroke="#505050" stroke-width="3.3" stroke-linecap="round"/><path d="M6.1 2.5 L10.3 5.5" stroke="#585858" stroke-width="3.3" stroke-linecap="round"/><path d="M1.6 3.7 L5 6.1" stroke="#c4c4c4" stroke-width="1.2" stroke-linecap="round"/><path d="M6.4 2.3 L9.8 4.8" stroke="#cccccc" stroke-width="1.2" stroke-linecap="round"/><circle cx="6" cy="7.1" r="1.9" fill="url(#glens)" stroke="#6a8cae" stroke-width="0.5"/><circle cx="11" cy="6.2" r="1.9" fill="url(#glens)" stroke="#6a8cae" stroke-width="0.5"/></svg>
<div class="t" style="left:1057px;top:218px;transform:scaleX(0.9070);transform-origin:1px 0;">DEECLE</div>
<div style="left:1185px;top:213px;width:385px;height:22px;background:#f0f0f0;border:1px solid #abadb3;box-sizing:border-box"></div>
<div class="t" style="left:1190px;top:218px;transform:scaleX(0.9444);transform-origin:1px 0;">DEEP BLUE TRANSPORTATION</div>
<div class="t" style="left:1580px;top:218px;letter-spacing:0.286px;">Contact:</div>
<div style="left:1642px;top:213px;width:164px;height:22px;background:#fff;border:1px solid #abadb3;box-sizing:border-box"></div>
<div class="t" style="left:988px;top:242px;letter-spacing:0.300px;">Rev Type 1:</div>
<div style="left:1051px;top:241px;width:125px;height:23px;background:#fff;border:1px solid #abadb3;box-sizing:border-box"></div>
<div style="left:1157px;top:243px;width:17px;height:19px;background:#e1e1e1;border:1px solid #acacac;box-sizing:border-box"></div>
<svg style="left:1161px;top:250px" width="10" height="7" viewBox="0 0 10 7"><path d="M0.4 1.1 L4.4 5 L8.4 1.1" fill="none" stroke="#3a3a3a" stroke-width="1.15"/></svg>
<div class="t" style="left:1056px;top:246px;">UNKNOWN</div>
<div class="t" style="left:1185px;top:247px;letter-spacing:0.200px;">Rev Type 2:</div>
<div style="left:1248px;top:241px;width:125px;height:23px;background:#fff;border:1px solid #abadb3;box-sizing:border-box"></div>
<div style="left:1354px;top:243px;width:17px;height:19px;background:#e1e1e1;border:1px solid #acacac;box-sizing:border-box"></div>
<svg style="left:1358px;top:250px" width="10" height="7" viewBox="0 0 10 7"><path d="M0.4 1.1 L4.4 5 L8.4 1.1" fill="none" stroke="#3a3a3a" stroke-width="1.15"/></svg>
<div class="t" style="left:1253px;top:246px;">UNKNOWN</div>
<div class="t" style="left:1382px;top:247px;letter-spacing:0.200px;">Rev Type 3:</div>
<div style="left:1445px;top:241px;width:125px;height:23px;background:#fff;border:1px solid #abadb3;box-sizing:border-box"></div>
<div style="left:1551px;top:243px;width:17px;height:19px;background:#e1e1e1;border:1px solid #acacac;box-sizing:border-box"></div>
<svg style="left:1555px;top:250px" width="10" height="7" viewBox="0 0 10 7"><path d="M0.4 1.1 L4.4 5 L8.4 1.1" fill="none" stroke="#3a3a3a" stroke-width="1.15"/></svg>
<div class="t" style="left:1450px;top:246px;">UNKNOWN</div>
<div class="t" style="left:1579px;top:247px;letter-spacing:0.200px;">Rev Type 4:</div>
<div style="left:1642px;top:241px;width:125px;height:23px;background:#fff;border:1px solid #abadb3;box-sizing:border-box"></div>
<div style="left:1748px;top:243px;width:17px;height:19px;background:#e1e1e1;border:1px solid #acacac;box-sizing:border-box"></div>
<svg style="left:1752px;top:250px" width="10" height="7" viewBox="0 0 10 7"><path d="M0.4 1.1 L4.4 5 L8.4 1.1" fill="none" stroke="#3a3a3a" stroke-width="1.15"/></svg>
<div class="t" style="left:1647px;top:246px;">UNKNOWN</div>
<div style="left:981px;top:279px;width:932px;height:89px;border:1px solid #6b6b6b;box-sizing:border-box;background:#f0f0f0"></div>
<div style="left:982px;top:280px;width:930px;height:1px;background:#fafafa"></div>
<div style="left:982px;top:281px;width:20px;height:23px;background:linear-gradient(#fdfdfd,#f0f0f0)"></div>
<div style="left:1002px;top:281px;width:37px;height:23px;background:linear-gradient(#c3c3c3,#eeeeee 85%,#f4f4f4);border-left:1px solid #f8f8f8;border-right:1px solid #dcdcdc;box-sizing:border-box"></div>
<svg style="left:1012px;top:284px" width="16" height="16" viewBox="0 0 16 16"><rect x="0.75" y="0.75" width="14.5" height="14.5" fill="#fdfdfd" stroke="#b2b2b2" stroke-width="1.5"/><path d="M3.5 2.8 H13" stroke="#d0d0f0" stroke-width="1"/><path d="M2 5.5 H13 M2 8.5 H7 M2 11.5 H7" stroke="#8c8cd0" stroke-width="1"/><path d="M7.5 9 V14" stroke="#6a6ab0" stroke-width="1"/><path d="M7.5 10.5 H13.5" stroke="#262660" stroke-width="1.2"/><path d="M5 7.5 H9.3 Q10.3 7.5 10.3 6.5 V4" fill="none" stroke="#262660" stroke-width="1.3"/><path d="M7.8 4.8 L10.3 2 L12.8 4.8 Z" fill="#262660"/></svg>
<div style="left:1039px;top:281px;width:119px;height:23px;background:linear-gradient(#c3c3c3,#eeeeee 85%,#f4f4f4);border-left:1px solid #f8f8f8;border-right:1px solid #dcdcdc;box-sizing:border-box"></div>
<div class="t" style="left:1044px;top:286px;font-weight:bold;letter-spacing:0.167px;">Assign Assets</div>
<svg style="left:1145px;top:289px" width="10" height="8" viewBox="0 0 10 8"><path d="M0 3.6 H3.6" stroke="#000" stroke-width="1.1"/><path d="M4 0 V7" stroke="#000" stroke-width="1.4"/><rect x="4.8" y="1.6" width="4" height="3.8" fill="#c8c8c8" stroke="#000" stroke-width="1.3"/></svg>
<div style="left:1158px;top:281px;width:250px;height:23px;background:linear-gradient(#c3c3c3,#eeeeee 85%,#f4f4f4);border-left:1px solid #f8f8f8;border-right:1px solid #dcdcdc;box-sizing:border-box"></div>
<div class="t" style="left:1162px;top:286px;font-weight:bold;letter-spacing:0.500px;">Event</div>
<svg style="left:1395px;top:289px" width="10" height="8" viewBox="0 0 10 8"><path d="M0 3.6 H3.6" stroke="#000" stroke-width="1.1"/><path d="M4 0 V7" stroke="#000" stroke-width="1.4"/><rect x="4.8" y="1.6" width="4" height="3.8" fill="#c8c8c8" stroke="#000" stroke-width="1.3"/></svg>
<div style="left:1408px;top:281px;width:100px;height:23px;background:linear-gradient(#c3c3c3,#eeeeee 85%,#f4f4f4);border-left:1px solid #f8f8f8;border-right:1px solid #dcdcdc;box-sizing:border-box"></div>
<div class="t" style="left:1412px;top:286px;font-weight:bold;letter-spacing:0.500px;">Evt</div>
<svg style="left:1495px;top:289px" width="10" height="8" viewBox="0 0 10 8"><path d="M0 3.6 H3.6" stroke="#000" stroke-width="1.1"/><path d="M4 0 V7" stroke="#000" stroke-width="1.4"/><rect x="4.8" y="1.6" width="4" height="3.8" fill="#c8c8c8" stroke="#000" stroke-width="1.3"/></svg>
<div style="left:1508px;top:281px;width:105px;height:23px;background:linear-gradient(#c3c3c3,#eeeeee 85%,#f4f4f4);border-left:1px solid #f8f8f8;border-right:1px solid #dcdcdc;box-sizing:border-box"></div>
<div class="t" style="left:1513px;top:286px;font-weight:bold;letter-spacing:0.444px;">Company ID</div>
<svg style="left:1600px;top:289px" width="10" height="8" viewBox="0 0 10 8"><path d="M0 3.6 H3.6" stroke="#000" stroke-width="1.1"/><path d="M4 0 V7" stroke="#000" stroke-width="1.4"/><rect x="4.8" y="1.6" width="4" height="3.8" fill="#c8c8c8" stroke="#000" stroke-width="1.3"/></svg>
<div style="left:1613px;top:281px;width:115px;height:23px;background:linear-gradient(#c3c3c3,#eeeeee 85%,#f4f4f4);border-left:1px solid #f8f8f8;border-right:1px solid #dcdcdc;box-sizing:border-box"></div>
<div class="t" style="left:1617px;top:286px;font-weight:bold;letter-spacing:0.583px;">Primary Order</div>
<svg style="left:1715px;top:289px" width="10" height="8" viewBox="0 0 10 8"><path d="M0 3.6 H3.6" stroke="#000" stroke-width="1.1"/><path d="M4 0 V7" stroke="#000" stroke-width="1.4"/><rect x="4.8" y="1.6" width="4" height="3.8" fill="#c8c8c8" stroke="#000" stroke-width="1.3"/></svg>
<div style="left:1728px;top:281px;width:100px;height:23px;background:linear-gradient(#c3c3c3,#eeeeee 85%,#f4f4f4);border-left:1px solid #f8f8f8;border-right:1px solid #dcdcdc;box-sizing:border-box"></div>
<div class="t" style="left:1732px;top:286px;font-weight:bold;letter-spacing:0.500px;">IsPayable</div>
<svg style="left:1815px;top:289px" width="10" height="8" viewBox="0 0 10 8"><path d="M0 3.6 H3.6" stroke="#000" stroke-width="1.1"/><path d="M4 0 V7" stroke="#000" stroke-width="1.4"/><rect x="4.8" y="1.6" width="4" height="3.8" fill="#c8c8c8" stroke="#000" stroke-width="1.3"/></svg>
<div style="left:1828px;top:281px;width:84px;height:23px;background:linear-gradient(#c3c3c3,#eeeeee 85%,#f4f4f4);border-left:1px solid #f8f8f8;border-right:1px solid #dcdcdc;box-sizing:border-box"></div>
<div class="t" style="left:1833px;top:286px;font-weight:bold;letter-spacing:0.545px;width:78.0px;overflow:hidden;">Company Name</div>
<div style="left:1002px;top:304px;width:910px;height:2px;background:#e6ecee"></div>
<svg style="left:987px;top:312px" width="9" height="9" viewBox="0 0 9 9"><rect x="0.5" y="0.5" width="8" height="8" rx="1.5" fill="#fafafa" stroke="#8c8c8c"/><path d="M2 4.5 H7 M4.5 2 V7" stroke="#34508c" stroke-width="1.1"/></svg>
<div style="left:997px;top:316px;width:4px;height:1px;background:repeating-linear-gradient(to right,#a0a0a0 0 1px,transparent 1px 2px)"></div>
<div style="left:991px;top:322px;width:1px;height:11px;background:repeating-linear-gradient(#a0a0a0 0 1px,transparent 1px 2px)"></div>
<div style="left:1002px;top:306px;width:36px;height:20px;background:linear-gradient(to right,#fdfdfd,#f0f0f0 35%,#cdcdcd);border-bottom:2px solid #c8c8c8;box-sizing:border-box"></div>
<div class="t" style="left:1006px;top:310px;">1</div>
<svg style="left:1030px;top:311px" width="6" height="10" viewBox="0 0 6 10"><path d="M0.5 0.5 L5.5 5 L0.5 9.5 Z" fill="#000"/></svg>
<div style="left:1039px;top:306px;width:119px;height:20px;background:#dfe6ec"></div>
<div style="left:1039px;top:307px;width:117px;height:18px;background:linear-gradient(#ffffff,#f1f1f1);border-right:2px solid #d8d8d8;border-bottom:2px solid #dadada;box-sizing:border-box"></div>
<svg style="left:1041px;top:309px" width="14" height="14" viewBox="0 0 14 14"><rect x="0" y="0" width="14" height="14" fill="#c6c6c6"/><path d="M4.2 0.7 H9.6" stroke="#a00000" stroke-width="1.3"/><path d="M0 3.5 H2.6" stroke="#a00000" stroke-width="1.3"/><rect x="1" y="6" width="2" height="2" fill="#e0a0a0"/><circle cx="11.9" cy="1.9" r="1.8" fill="#000a96"/><path d="M5.4 3 L11 2.4 L12.3 4.2 L9.4 9.9 L6.6 9.7 Z" fill="#000a96"/><path d="M6 3.6 L2.6 6 L1.6 10.2 M10.8 4.4 L12.2 8.8 M7.6 9.3 L4 10.6 L1.6 10.8 M8.8 9.6 L7.4 12.6 L9.4 13.2" fill="none" stroke="#000a96" stroke-width="1.9"/></svg>
<div style="left:1039px;top:306px;width:119px;height:1px;background:repeating-linear-gradient(to right,#98b4d8 0 1px,transparent 1px 2px)"></div>
<div style="left:1039px;top:306px;width:1px;height:20px;background:repeating-linear-gradient(#98b4d8 0 1px,transparent 1px 2px)"></div>
<div style="left:1158px;top:306px;width:249px;height:19px;background:#b0c4de"></div>
<div style="left:1407px;top:306px;width:1px;height:20px;background:repeating-linear-gradient(#c8b89a 0 1px,#b0c4de 1px 2px)"></div>
<div class="t" style="left:1160px;top:308px;">LLD</div>
<div style="left:1408px;top:306px;width:100px;height:20px;background:#dfe6ec"></div>
<div style="left:1408px;top:307px;width:98px;height:18px;background:linear-gradient(#ffffff,#f1f1f1);border-right:2px solid #d8d8d8;border-bottom:2px solid #dadada;box-sizing:border-box"></div>
<svg style="left:1410px;top:309px" width="14" height="14" viewBox="0 0 14 14"><rect x="1.5" y="1.5" width="12" height="12" rx="2" fill="#606060" opacity="0.45"/><rect x="0.6" y="0.8" width="11.6" height="11.6" rx="2" fill="#fff" stroke="#8080c0" stroke-width="1.1"/><path d="M1.6 1.6 H11.4" stroke="#505050" stroke-width="1.6"/><path d="M3.8 4.6 V8.6 M6 4.6 H8.8 V6.6 H6 V8.6 H9" fill="none" stroke="#f45010" stroke-width="1.4"/><path d="M2 10.2 H10.8" stroke="#b0b0e8" stroke-width="1.2"/></svg>
<div style="left:1508px;top:306px;width:104px;height:19px;background:#b0c4de"></div>
<div style="left:1612px;top:306px;width:1px;height:20px;background:repeating-linear-gradient(#c8b89a 0 1px,#b0c4de 1px 2px)"></div>
<div class="t" style="left:1511px;top:308px;letter-spacing:0.200px;">SILOLI</div>
<div style="left:1613px;top:306px;width:114px;height:19px;background:#b0c4de"></div>
<div style="left:1727px;top:306px;width:1px;height:20px;background:repeating-linear-gradient(#c8b89a 0 1px,#b0c4de 1px 2px)"></div>
<div class="t" style="left:1615px;top:308px;">0</div>
<div style="left:1728px;top:306px;width:99px;height:19px;background:#d3d3d3"></div>
<div style="left:1827px;top:306px;width:1px;height:20px;background:repeating-linear-gradient(#b8b8b8 0 1px,#ffffff 1px 2px)"></div>
<svg style="left:1771px;top:309px" width="14" height="14" viewBox="0 0 14 14"><rect x="0" y="0" width="12" height="12" fill="#fff"/><path d="M2 6.2 L4.8 9 L10.4 3" fill="none" stroke="#b0b0b0" stroke-width="1.3"/></svg>
<div style="left:1828px;top:306px;width:83px;height:19px;background:#b0c4de"></div>
<div class="t" style="left:1831px;top:308px;transform:scaleX(0.9200);transform-origin:1px 0;width:85.9px;overflow:hidden;">SILVERSMITH PRODUCTS</div>
<div style="left:1039px;top:325px;width:873px;height:1px;background:repeating-linear-gradient(to right,#c8b89a 0 1px,#dfe6ec 1px 2px)"></div>
<div style="left:1039px;top:326px;width:873px;height:1px;background:#f8fafc"></div>
<svg style="left:987px;top:333px" width="9" height="9" viewBox="0 0 9 9"><rect x="0.5" y="0.5" width="8" height="8" rx="1.5" fill="#fafafa" stroke="#8c8c8c"/><path d="M2 4.5 H7 M4.5 2 V7" stroke="#34508c" stroke-width="1.1"/></svg>
<div style="left:997px;top:337px;width:4px;height:1px;background:repeating-linear-gradient(to right,#a0a0a0 0 1px,transparent 1px 2px)"></div>
<div style="left:1002px;top:327px;width:36px;height:20px;background:linear-gradient(to right,#fdfdfd,#f0f0f0 35%,#cdcdcd);border-bottom:2px solid #c8c8c8;box-sizing:border-box"></div>
<div class="t" style="left:1006px;top:331px;">2</div>
<div style="left:1039px;top:327px;width:119px;height:20px;background:#ffffff"></div>
<div style="left:1039px;top:329px;width:117px;height:17px;background:linear-gradient(#f4f4f4,#e9e9e9);border-right:2px solid #d8d8d8;border-bottom:2px solid #dadada;box-sizing:border-box"></div>
<div style="left:1158px;top:328px;width:249px;height:18px;background:#ff0000"></div>
<div style="left:1407px;top:327px;width:1px;height:20px;background:repeating-linear-gradient(#b8b8b8 0 1px,#ffffff 1px 2px)"></div>
<div class="t" style="left:1160px;top:329px;transform:scaleX(0.9545);transform-origin:1px 0;">XDT</div>
<div style="left:1408px;top:327px;width:100px;height:20px;background:#ffffff"></div>
<div style="left:1408px;top:329px;width:98px;height:17px;background:linear-gradient(#f4f4f4,#e9e9e9);border-right:2px solid #d8d8d8;border-bottom:2px solid #dadada;box-sizing:border-box"></div>
<svg style="left:1410px;top:330px" width="14" height="14" viewBox="0 0 14 14"><rect x="1.5" y="1.5" width="12" height="12" rx="2" fill="#909090" opacity="0.35"/><rect x="0.6" y="0.8" width="11.6" height="11.6" rx="2" fill="#ececec" stroke="#acacac" stroke-width="1.1"/><path d="M1.6 1.6 H11.4" stroke="#a0a0a0" stroke-width="1.6"/><path d="M3.8 4.6 V8.6 M6 4.6 H8.8 V6.6 H6 V8.6 H9" fill="none" stroke="#c8c8c8" stroke-width="1.2"/></svg>
<div style="left:1508px;top:328px;width:104px;height:18px;background:#fff"></div>
<div style="left:1612px;top:327px;width:1px;height:20px;background:repeating-linear-gradient(#b8b8b8 0 1px,#ffffff 1px 2px)"></div>
<div class="t" style="left:1511px;top:329px;transform:scaleX(0.9286);transform-origin:1px 0;">YARD46</div>
<div style="left:1613px;top:328px;width:114px;height:18px;background:#fff"></div>
<div style="left:1727px;top:327px;width:1px;height:20px;background:repeating-linear-gradient(#b8b8b8 0 1px,#ffffff 1px 2px)"></div>
<div class="t" style="left:1615px;top:329px;">0</div>
<div style="left:1728px;top:328px;width:99px;height:18px;background:#f0f0f0"></div>
<div style="left:1827px;top:327px;width:1px;height:20px;background:repeating-linear-gradient(#b8b8b8 0 1px,#ffffff 1px 2px)"></div>
<svg style="left:1771px;top:330px" width="14" height="14" viewBox="0 0 14 14"><rect x="0.5" y="0.5" width="12" height="12" fill="#fff" stroke="#bdbdbd"/><path d="M2.4 6.4 L5.2 9.2 L10.6 3.2" fill="none" stroke="#b0b0b0" stroke-width="1.3"/></svg>
<div style="left:1828px;top:328px;width:83px;height:18px;background:#fff"></div>
<div class="t" style="left:1832px;top:329px;transform:scaleX(0.9200);transform-origin:0px 0;width:85.9px;overflow:hidden;">TURNPIKE YARD OFFICE</div>
<div style="left:1039px;top:346px;width:873px;height:1px;background:repeating-linear-gradient(to right,#b8b8b8 0 1px,#ffffff 1px 2px)"></div>
<div style="left:1039px;top:327px;width:873px;height:1px;background:repeating-linear-gradient(to right,#b8b8b8 0 1px,#ffffff 1px 2px)"></div>
<div style="left:982px;top:347px;width:930px;height:3px;background:linear-gradient(to right,#e9e9e9,#c9c9c9)"></div>
<div style="left:982px;top:350px;width:930px;height:1px;background:#fafafa"></div>
<div style="left:982px;top:351px;width:930px;height:16px;background:#f0f0f0"></div>
<div style="left:998px;top:351px;width:156px;height:16px;background:#cbcbcb"></div>
<svg style="left:987px;top:355px" width="7" height="8" viewBox="0 0 7 8"><path d="M5.6 0.6 L1.6 4 L5.6 7.4" fill="none" stroke="#3c3c3c" stroke-width="2"/></svg>
<svg style="left:1900px;top:355px" width="7" height="8" viewBox="0 0 7 8"><path d="M1.4 0.6 L5.4 4 L1.4 7.4" fill="none" stroke="#3c3c3c" stroke-width="2"/></svg>
<div style="left:491px;top:385px;width:952px;height:295px;border:2px solid #a0a0a0;box-sizing:border-box"></div>
<div style="left:493px;top:387px;width:948px;height:291px;border-left:1px solid #fbfbfb;border-top:1px solid #fbfbfb;box-sizing:border-box"></div>
<div style="left:494px;top:396px;width:946px;height:281px;border:1px solid #d3dee6;border-radius:3px;box-sizing:border-box"></div>
<div style="left:499px;top:395px;width:290px;height:3px;background:#f0f0f0"></div>
<div class="t" style="left:502px;top:389px;font-weight:bold;letter-spacing:0.667px;">Turnpike Movement (1983) Order(s) - 2014, 2015</div>
<div style="left:500px;top:416px;width:934px;height:68px;border:1px solid #d3dee6;border-radius:3px;box-sizing:border-box"></div>
<div style="left:505px;top:415px;width:123px;height:3px;background:#f0f0f0"></div>
<div class="t" style="left:508px;top:409px;letter-spacing:0.100px;">Asset Assignment 1993</div>
<div class="t" style="left:505px;top:431px;letter-spacing:0.286px;">Tractor:</div>
<div style="left:548px;top:426px;width:116px;height:23px;background:#fff;border:1px solid #abadb3;box-sizing:border-box"></div>
<div style="left:645px;top:428px;width:17px;height:19px;background:#e1e1e1;border:1px solid #acacac;box-sizing:border-box"></div>
<svg style="left:649px;top:435px" width="10" height="7" viewBox="0 0 10 7"><path d="M0.4 1.1 L4.4 5 L8.4 1.1" fill="none" stroke="#3a3a3a" stroke-width="1.15"/></svg>
<div style="left:625px;top:429px;width:19px;height:17px;background:#e1e1e1;border:1px solid #acacac;box-sizing:border-box"></div>
<svg style="left:628px;top:432px" width="14" height="11" viewBox="0 0 14 11"><path d="M1.4 3.8 L5.4 6.6" stroke="#505050" stroke-width="3.3" stroke-linecap="round"/><path d="M6.1 2.5 L10.3 5.5" stroke="#585858" stroke-width="3.3" stroke-linecap="round"/><path d="M1.6 3.7 L5 6.1" stroke="#c4c4c4" stroke-width="1.2" stroke-linecap="round"/><path d="M6.4 2.3 L9.8 4.8" stroke="#cccccc" stroke-width="1.2" stroke-linecap="round"/><circle cx="6" cy="7.1" r="1.9" fill="url(#glens)" stroke="#6a8cae" stroke-width="0.5"/><circle cx="11" cy="6.2" r="1.9" fill="url(#glens)" stroke="#6a8cae" stroke-width="0.5"/></svg>
<div class="t" style="left:554px;top:431px;">UNKNOWN</div>
<div class="t" style="left:673px;top:431px;letter-spacing:0.500px;">Driver 1:</div>
<div style="left:723px;top:426px;width:116px;height:23px;background:#fff;border:1px solid #abadb3;box-sizing:border-box"></div>
<div style="left:820px;top:428px;width:17px;height:19px;background:#e1e1e1;border:1px solid #acacac;box-sizing:border-box"></div>
<svg style="left:824px;top:435px" width="10" height="7" viewBox="0 0 10 7"><path d="M0.4 1.1 L4.4 5 L8.4 1.1" fill="none" stroke="#3a3a3a" stroke-width="1.15"/></svg>
<div style="left:800px;top:429px;width:19px;height:17px;background:#e1e1e1;border:1px solid #acacac;box-sizing:border-box"></div>
<svg style="left:803px;top:432px" width="14" height="11" viewBox="0 0 14 11"><path d="M1.4 3.8 L5.4 6.6" stroke="#505050" stroke-width="3.3" stroke-linecap="round"/><path d="M6.1 2.5 L10.3 5.5" stroke="#585858" stroke-width="3.3" stroke-linecap="round"/><path d="M1.6 3.7 L5 6.1" stroke="#c4c4c4" stroke-width="1.2" stroke-linecap="round"/><path d="M6.4 2.3 L9.8 4.8" stroke="#cccccc" stroke-width="1.2" stroke-linecap="round"/><circle cx="6" cy="7.1" r="1.9" fill="url(#glens)" stroke="#6a8cae" stroke-width="0.5"/><circle cx="11" cy="6.2" r="1.9" fill="url(#glens)" stroke="#6a8cae" stroke-width="0.5"/></svg>
<div class="t" style="left:729px;top:431px;">UNKNOWN</div>
<div class="t" style="left:849px;top:431px;letter-spacing:0.222px;">Trailer 1:</div>
<div style="left:899px;top:426px;width:116px;height:23px;background:#fff;border:1px solid #abadb3;box-sizing:border-box"></div>
<div style="left:996px;top:428px;width:17px;height:19px;background:#e1e1e1;border:1px solid #acacac;box-sizing:border-box"></div>
<svg style="left:1000px;top:435px" width="10" height="7" viewBox="0 0 10 7"><path d="M0.4 1.1 L4.4 5 L8.4 1.1" fill="none" stroke="#3a3a3a" stroke-width="1.15"/></svg>
<div style="left:976px;top:429px;width:19px;height:17px;background:#e1e1e1;border:1px solid #acacac;box-sizing:border-box"></div>
<svg style="left:979px;top:432px" width="14" height="11" viewBox="0 0 14 11"><path d="M1.4 3.8 L5.4 6.6" stroke="#505050" stroke-width="3.3" stroke-linecap="round"/><path d="M6.1 2.5 L10.3 5.5" stroke="#585858" stroke-width="3.3" stroke-linecap="round"/><path d="M1.6 3.7 L5 6.1" stroke="#c4c4c4" stroke-width="1.2" stroke-linecap="round"/><path d="M6.4 2.3 L9.8 4.8" stroke="#cccccc" stroke-width="1.2" stroke-linecap="round"/><circle cx="6" cy="7.1" r="1.9" fill="url(#glens)" stroke="#6a8cae" stroke-width="0.5"/><circle cx="11" cy="6.2" r="1.9" fill="url(#glens)" stroke="#6a8cae" stroke-width="0.5"/></svg>
<div class="t" style="left:905px;top:431px;">UNKNOWN</div>
<div class="t" style="left:1024px;top:431px;letter-spacing:0.500px;">Status:</div>
<div style="left:1024px;top:442px;width:37px;height:1px;background:#000"></div>
<div style="left:1080px;top:426px;width:103px;height:23px;background:#fff;border:1px solid #abadb3;box-sizing:border-box"></div>
<div style="left:1164px;top:428px;width:17px;height:19px;background:#e1e1e1;border:1px solid #acacac;box-sizing:border-box"></div>
<svg style="left:1168px;top:435px" width="10" height="7" viewBox="0 0 10 7"><path d="M0.4 1.1 L4.4 5 L8.4 1.1" fill="none" stroke="#3a3a3a" stroke-width="1.15"/></svg>
<div style="left:1148px;top:429px;width:15px;height:17px;background:#e4e4e4;border:1px solid #cdcdcd;box-sizing:border-box"></div>
<div class="t" style="left:1085px;top:431px;letter-spacing:0.250px;">Available</div>
<svg style="left:1194px;top:426px" width="24" height="23" viewBox="0 0 24 23"><path d="M8.4 21.4 L21.8 17.3 L21 13.6 L20 7.5 L8.2 19.4 Z" fill="#f2f2f2"/><path d="M9.5 20.2 L21.2 16.2 M10 19.2 L20.8 14.6" stroke="#b4aca0" stroke-width="0.8"/><path d="M1.8 7.7 L12.1 0.4 L20.2 7.5 L8.3 19.6 Z" fill="#0a78e6"/><path d="M2.2 7.6 L8.8 20.8" stroke="#3aa6ff" stroke-width="2"/><path d="M8.4 21.6 L22 17.5" stroke="#0a50b8" stroke-width="1.4"/><path d="M6.9 7.7 L12.4 4.4 L13 6 L7.7 9.5 Z" fill="#80c4f6"/></svg>
<div class="t" style="left:1219px;top:429px;color:#0000ff;letter-spacing:0.278px;">Open in Trip Folder</div>
<div style="left:1220px;top:440px;width:100px;height:1px;background:#0000ff"></div>
<svg style="left:1394px;top:426px" width="24" height="22" viewBox="0 0 24 22"><path d="M8.5 1.2 L15.2 7.8 H11.8 V20.6 H5 V7.8 H1.8 Z" fill="url(#gblue)" stroke="#2a8cf6" stroke-width="0.8"/><path d="M6.6 8.5 V19.5" stroke="#c8e4ff" stroke-width="0.9" opacity="0.7"/><path d="M5.4 20.2 H11.4" stroke="#0840a0" stroke-width="1.1"/><rect x="13" y="13.2" width="9.2" height="3.6" fill="url(#gred)" stroke="#b81000" stroke-width="0.8"/></svg>
<div class="t" style="left:506px;top:459px;letter-spacing:0.143px;">Carrier:</div>
<div style="left:548px;top:454px;width:116px;height:23px;background:#fff;border:1px solid #abadb3;box-sizing:border-box"></div>
<div style="left:645px;top:456px;width:17px;height:19px;background:#e1e1e1;border:1px solid #acacac;box-sizing:border-box"></div>
<svg style="left:649px;top:463px" width="10" height="7" viewBox="0 0 10 7"><path d="M0.4 1.1 L4.4 5 L8.4 1.1" fill="none" stroke="#3a3a3a" stroke-width="1.15"/></svg>
<div style="left:625px;top:457px;width:19px;height:17px;background:#e1e1e1;border:1px solid #acacac;box-sizing:border-box"></div>
<svg style="left:628px;top:460px" width="14" height="11" viewBox="0 0 14 11"><path d="M1.4 3.8 L5.4 6.6" stroke="#505050" stroke-width="3.3" stroke-linecap="round"/><path d="M6.1 2.5 L10.3 5.5" stroke="#585858" stroke-width="3.3" stroke-linecap="round"/><path d="M1.6 3.7 L5 6.1" stroke="#c4c4c4" stroke-width="1.2" stroke-linecap="round"/><path d="M6.4 2.3 L9.8 4.8" stroke="#cccccc" stroke-width="1.2" stroke-linecap="round"/><circle cx="6" cy="7.1" r="1.9" fill="url(#glens)" stroke="#6a8cae" stroke-width="0.5"/><circle cx="11" cy="6.2" r="1.9" fill="url(#glens)" stroke="#6a8cae" stroke-width="0.5"/></svg>
<div class="t" style="left:554px;top:459px;">UNKNOWN</div>
<div class="t" style="left:673px;top:459px;letter-spacing:0.500px;">Driver 2:</div>
<div style="left:723px;top:454px;width:116px;height:23px;background:#fff;border:1px solid #abadb3;box-sizing:border-box"></div>
<div style="left:820px;top:456px;width:17px;height:19px;background:#e1e1e1;border:1px solid #acacac;box-sizing:border-box"></div>
<svg style="left:824px;top:463px" width="10" height="7" viewBox="0 0 10 7"><path d="M0.4 1.1 L4.4 5 L8.4 1.1" fill="none" stroke="#3a3a3a" stroke-width="1.15"/></svg>
<div style="left:800px;top:457px;width:19px;height:17px;background:#e1e1e1;border:1px solid #acacac;box-sizing:border-box"></div>
<svg style="left:803px;top:460px" width="14" height="11" viewBox="0 0 14 11"><path d="M1.4 3.8 L5.4 6.6" stroke="#505050" stroke-width="3.3" stroke-linecap="round"/><path d="M6.1 2.5 L10.3 5.5" stroke="#585858" stroke-width="3.3" stroke-linecap="round"/><path d="M1.6 3.7 L5 6.1" stroke="#c4c4c4" stroke-width="1.2" stroke-linecap="round"/><path d="M6.4 2.3 L9.8 4.8" stroke="#cccccc" stroke-width="1.2" stroke-linecap="round"/><circle cx="6" cy="7.1" r="1.9" fill="url(#glens)" stroke="#6a8cae" stroke-width="0.5"/><circle cx="11" cy="6.2" r="1.9" fill="url(#glens)" stroke="#6a8cae" stroke-width="0.5"/></svg>
<div class="t" style="left:729px;top:459px;">UNKNOWN</div>
<div class="t" style="left:849px;top:459px;letter-spacing:0.222px;">Trailer 2:</div>
<div style="left:899px;top:454px;width:116px;height:23px;background:#fff;border:1px solid #abadb3;box-sizing:border-box"></div>
<div style="left:996px;top:456px;width:17px;height:19px;background:#e1e1e1;border:1px solid #acacac;box-sizing:border-box"></div>
<svg style="left:1000px;top:463px" width="10" height="7" viewBox="0 0 10 7"><path d="M0.4 1.1 L4.4 5 L8.4 1.1" fill="none" stroke="#3a3a3a" stroke-width="1.15"/></svg>
<div style="left:976px;top:457px;width:19px;height:17px;background:#e1e1e1;border:1px solid #acacac;box-sizing:border-box"></div>
<svg style="left:979px;top:460px" width="14" height="11" viewBox="0 0 14 11"><path d="M1.4 3.8 L5.4 6.6" stroke="#505050" stroke-width="3.3" stroke-linecap="round"/><path d="M6.1 2.5 L10.3 5.5" stroke="#585858" stroke-width="3.3" stroke-linecap="round"/><path d="M1.6 3.7 L5 6.1" stroke="#c4c4c4" stroke-width="1.2" stroke-linecap="round"/><path d="M6.4 2.3 L9.8 4.8" stroke="#cccccc" stroke-width="1.2" stroke-linecap="round"/><circle cx="6" cy="7.1" r="1.9" fill="url(#glens)" stroke="#6a8cae" stroke-width="0.5"/><circle cx="11" cy="6.2" r="1.9" fill="url(#glens)" stroke="#6a8cae" stroke-width="0.5"/></svg>
<div class="t" style="left:905px;top:459px;letter-spacing:0.330px;">5061</div>
<div class="t" style="left:1024px;top:459px;letter-spacing:0.333px;">Seg Miles:</div>
<div style="left:1080px;top:454px;width:103px;height:22px;background:#f0f0f0;border:1px solid #abadb3;box-sizing:border-box"></div>
<div class="t" style="left:1084px;top:459px;">198</div>
<div style="left:500px;top:502px;width:934px;height:67px;border:1px solid #d3dee6;border-radius:3px;box-sizing:border-box"></div>
<div style="left:505px;top:501px;width:63px;height:3px;background:#f0f0f0"></div>
<div class="t" style="left:507px;top:494px;letter-spacing:0.111px;">Order 2015</div>
<div class="t" style="left:504px;top:512px;letter-spacing:0.714px;">Bill To:</div>
<div style="left:569px;top:511px;width:125px;height:23px;background:#fff;border:1px solid #abadb3;box-sizing:border-box"></div>
<div style="left:675px;top:513px;width:17px;height:19px;background:#e1e1e1;border:1px solid #acacac;box-sizing:border-box"></div>
<svg style="left:679px;top:520px" width="10" height="7" viewBox="0 0 10 7"><path d="M0.4 1.1 L4.4 5 L8.4 1.1" fill="none" stroke="#3a3a3a" stroke-width="1.15"/></svg>
<div style="left:655px;top:514px;width:19px;height:17px;background:#e1e1e1;border:1px solid #acacac;box-sizing:border-box"></div>
<svg style="left:658px;top:517px" width="14" height="11" viewBox="0 0 14 11"><path d="M1.4 3.8 L5.4 6.6" stroke="#505050" stroke-width="3.3" stroke-linecap="round"/><path d="M6.1 2.5 L10.3 5.5" stroke="#585858" stroke-width="3.3" stroke-linecap="round"/><path d="M1.6 3.7 L5 6.1" stroke="#c4c4c4" stroke-width="1.2" stroke-linecap="round"/><path d="M6.4 2.3 L9.8 4.8" stroke="#cccccc" stroke-width="1.2" stroke-linecap="round"/><circle cx="6" cy="7.1" r="1.9" fill="url(#glens)" stroke="#6a8cae" stroke-width="0.5"/><circle cx="11" cy="6.2" r="1.9" fill="url(#glens)" stroke="#6a8cae" stroke-width="0.5"/></svg>
<div class="t" style="left:575px;top:516px;transform:scaleX(0.9070);transform-origin:1px 0;">DEECLE</div>
<div style="left:703px;top:511px;width:385px;height:22px;background:#f0f0f0;border:1px solid #abadb3;box-sizing:border-box"></div>
<div class="t" style="left:708px;top:516px;transform:scaleX(0.9444);transform-origin:1px 0;">DEEP BLUE TRANSPORTATION</div>
<div class="t" style="left:1098px;top:516px;letter-spacing:0.286px;">Contact:</div>
<div style="left:1160px;top:511px;width:164px;height:22px;background:#fff;border:1px solid #abadb3;box-sizing:border-box"></div>
<div class="t" style="left:506px;top:540px;letter-spacing:0.300px;">Rev Type 1:</div>
<div style="left:569px;top:539px;width:125px;height:23px;background:#fff;border:1px solid #abadb3;box-sizing:border-box"></div>
<div style="left:675px;top:541px;width:17px;height:19px;background:#e1e1e1;border:1px solid #acacac;box-sizing:border-box"></div>
<svg style="left:679px;top:548px" width="10" height="7" viewBox="0 0 10 7"><path d="M0.4 1.1 L4.4 5 L8.4 1.1" fill="none" stroke="#3a3a3a" stroke-width="1.15"/></svg>
<div class="t" style="left:574px;top:544px;">UNKNOWN</div>
<div class="t" style="left:703px;top:545px;letter-spacing:0.200px;">Rev Type 2:</div>
<div style="left:766px;top:539px;width:125px;height:23px;background:#fff;border:1px solid #abadb3;box-sizing:border-box"></div>
<div style="left:872px;top:541px;width:17px;height:19px;background:#e1e1e1;border:1px solid #acacac;box-sizing:border-box"></div>
<svg style="left:876px;top:548px" width="10" height="7" viewBox="0 0 10 7"><path d="M0.4 1.1 L4.4 5 L8.4 1.1" fill="none" stroke="#3a3a3a" stroke-width="1.15"/></svg>
<div class="t" style="left:771px;top:544px;">UNKNOWN</div>
<div class="t" style="left:900px;top:545px;letter-spacing:0.200px;">Rev Type 3:</div>
<div style="left:963px;top:539px;width:125px;height:23px;background:#fff;border:1px solid #abadb3;box-sizing:border-box"></div>
<div style="left:1069px;top:541px;width:17px;height:19px;background:#e1e1e1;border:1px solid #acacac;box-sizing:border-box"></div>
<svg style="left:1073px;top:548px" width="10" height="7" viewBox="0 0 10 7"><path d="M0.4 1.1 L4.4 5 L8.4 1.1" fill="none" stroke="#3a3a3a" stroke-width="1.15"/></svg>
<div class="t" style="left:968px;top:544px;">UNKNOWN</div>
<div class="t" style="left:1097px;top:545px;letter-spacing:0.200px;">Rev Type 4:</div>
<div style="left:1160px;top:539px;width:125px;height:23px;background:#fff;border:1px solid #abadb3;box-sizing:border-box"></div>
<div style="left:1266px;top:541px;width:17px;height:19px;background:#e1e1e1;border:1px solid #acacac;box-sizing:border-box"></div>
<svg style="left:1270px;top:548px" width="10" height="7" viewBox="0 0 10 7"><path d="M0.4 1.1 L4.4 5 L8.4 1.1" fill="none" stroke="#3a3a3a" stroke-width="1.15"/></svg>
<div class="t" style="left:1165px;top:544px;">UNKNOWN</div>
<div style="left:499px;top:577px;width:936px;height:95px;border:1px solid #6b6b6b;box-sizing:border-box;background:#f0f0f0"></div>
<div style="left:500px;top:578px;width:934px;height:1px;background:#fafafa"></div>
<div style="left:500px;top:579px;width:20px;height:23px;background:linear-gradient(#fdfdfd,#f0f0f0)"></div>
<div style="left:520px;top:579px;width:37px;height:23px;background:linear-gradient(#c3c3c3,#eeeeee 85%,#f4f4f4);border-left:1px solid #f8f8f8;border-right:1px solid #dcdcdc;box-sizing:border-box"></div>
<svg style="left:530px;top:582px" width="16" height="16" viewBox="0 0 16 16"><rect x="0.75" y="0.75" width="14.5" height="14.5" fill="#fdfdfd" stroke="#b2b2b2" stroke-width="1.5"/><path d="M3.5 2.8 H13" stroke="#d0d0f0" stroke-width="1"/><path d="M2 5.5 H13 M2 8.5 H7 M2 11.5 H7" stroke="#8c8cd0" stroke-width="1"/><path d="M7.5 9 V14" stroke="#6a6ab0" stroke-width="1"/><path d="M7.5 10.5 H13.5" stroke="#262660" stroke-width="1.2"/><path d="M5 7.5 H9.3 Q10.3 7.5 10.3 6.5 V4" fill="none" stroke="#262660" stroke-width="1.3"/><path d="M7.8 4.8 L10.3 2 L12.8 4.8 Z" fill="#262660"/></svg>
<div style="left:557px;top:579px;width:119px;height:23px;background:linear-gradient(#c3c3c3,#eeeeee 85%,#f4f4f4);border-left:1px solid #f8f8f8;border-right:1px solid #dcdcdc;box-sizing:border-box"></div>
<div class="t" style="left:562px;top:584px;font-weight:bold;letter-spacing:0.167px;">Assign Assets</div>
<svg style="left:663px;top:587px" width="10" height="8" viewBox="0 0 10 8"><path d="M0 3.6 H3.6" stroke="#000" stroke-width="1.1"/><path d="M4 0 V7" stroke="#000" stroke-width="1.4"/><rect x="4.8" y="1.6" width="4" height="3.8" fill="#c8c8c8" stroke="#000" stroke-width="1.3"/></svg>
<div style="left:676px;top:579px;width:250px;height:23px;background:linear-gradient(#c3c3c3,#eeeeee 85%,#f4f4f4);border-left:1px solid #f8f8f8;border-right:1px solid #dcdcdc;box-sizing:border-box"></div>
<div class="t" style="left:680px;top:584px;font-weight:bold;letter-spacing:0.500px;">Event</div>
<svg style="left:913px;top:587px" width="10" height="8" viewBox="0 0 10 8"><path d="M0 3.6 H3.6" stroke="#000" stroke-width="1.1"/><path d="M4 0 V7" stroke="#000" stroke-width="1.4"/><rect x="4.8" y="1.6" width="4" height="3.8" fill="#c8c8c8" stroke="#000" stroke-width="1.3"/></svg>
<div style="left:926px;top:579px;width:100px;height:23px;background:linear-gradient(#c3c3c3,#eeeeee 85%,#f4f4f4);border-left:1px solid #f8f8f8;border-right:1px solid #dcdcdc;box-sizing:border-box"></div>
<div class="t" style="left:930px;top:584px;font-weight:bold;letter-spacing:0.500px;">Evt</div>
<svg style="left:1013px;top:587px" width="10" height="8" viewBox="0 0 10 8"><path d="M0 3.6 H3.6" stroke="#000" stroke-width="1.1"/><path d="M4 0 V7" stroke="#000" stroke-width="1.4"/><rect x="4.8" y="1.6" width="4" height="3.8" fill="#c8c8c8" stroke="#000" stroke-width="1.3"/></svg>
<div style="left:1026px;top:579px;width:105px;height:23px;background:linear-gradient(#c3c3c3,#eeeeee 85%,#f4f4f4);border-left:1px solid #f8f8f8;border-right:1px solid #dcdcdc;box-sizing:border-box"></div>
<div class="t" style="left:1031px;top:584px;font-weight:bold;letter-spacing:0.444px;">Company ID</div>
<svg style="left:1118px;top:587px" width="10" height="8" viewBox="0 0 10 8"><path d="M0 3.6 H3.6" stroke="#000" stroke-width="1.1"/><path d="M4 0 V7" stroke="#000" stroke-width="1.4"/><rect x="4.8" y="1.6" width="4" height="3.8" fill="#c8c8c8" stroke="#000" stroke-width="1.3"/></svg>
<div style="left:1131px;top:579px;width:115px;height:23px;background:linear-gradient(#c3c3c3,#eeeeee 85%,#f4f4f4);border-left:1px solid #f8f8f8;border-right:1px solid #dcdcdc;box-sizing:border-box"></div>
<div class="t" style="left:1135px;top:584px;font-weight:bold;letter-spacing:0.583px;">Primary Order</div>
<svg style="left:1233px;top:587px" width="10" height="8" viewBox="0 0 10 8"><path d="M0 3.6 H3.6" stroke="#000" stroke-width="1.1"/><path d="M4 0 V7" stroke="#000" stroke-width="1.4"/><rect x="4.8" y="1.6" width="4" height="3.8" fill="#c8c8c8" stroke="#000" stroke-width="1.3"/></svg>
<div style="left:1246px;top:579px;width:100px;height:23px;background:linear-gradient(#c3c3c3,#eeeeee 85%,#f4f4f4);border-left:1px solid #f8f8f8;border-right:1px solid #dcdcdc;box-sizing:border-box"></div>
<div class="t" style="left:1250px;top:584px;font-weight:bold;letter-spacing:0.500px;">IsPayable</div>
<svg style="left:1333px;top:587px" width="10" height="8" viewBox="0 0 10 8"><path d="M0 3.6 H3.6" stroke="#000" stroke-width="1.1"/><path d="M4 0 V7" stroke="#000" stroke-width="1.4"/><rect x="4.8" y="1.6" width="4" height="3.8" fill="#c8c8c8" stroke="#000" stroke-width="1.3"/></svg>
<div style="left:1346px;top:579px;width:88px;height:23px;background:linear-gradient(#c3c3c3,#eeeeee 85%,#f4f4f4);border-left:1px solid #f8f8f8;border-right:1px solid #dcdcdc;box-sizing:border-box"></div>
<div class="t" style="left:1351px;top:584px;font-weight:bold;letter-spacing:0.545px;width:82.0px;overflow:hidden;">Company Name</div>
<div style="left:520px;top:602px;width:914px;height:2px;background:#e6ecee"></div>
<svg style="left:505px;top:610px" width="9" height="9" viewBox="0 0 9 9"><rect x="0.5" y="0.5" width="8" height="8" rx="1.5" fill="#fafafa" stroke="#8c8c8c"/><path d="M2 4.5 H7 M4.5 2 V7" stroke="#34508c" stroke-width="1.1"/></svg>
<div style="left:515px;top:614px;width:4px;height:1px;background:repeating-linear-gradient(to right,#a0a0a0 0 1px,transparent 1px 2px)"></div>
<div style="left:509px;top:620px;width:1px;height:11px;background:repeating-linear-gradient(#a0a0a0 0 1px,transparent 1px 2px)"></div>
<div style="left:520px;top:604px;width:36px;height:20px;background:linear-gradient(to right,#fdfdfd,#f0f0f0 35%,#cdcdcd);border-bottom:2px solid #c8c8c8;box-sizing:border-box"></div>
<div class="t" style="left:524px;top:608px;">1</div>
<div style="left:557px;top:604px;width:119px;height:20px;background:#ffffff"></div>
<div style="left:557px;top:605px;width:117px;height:18px;background:linear-gradient(#ffffff,#f1f1f1);border-right:2px solid #d8d8d8;border-bottom:2px solid #dadada;box-sizing:border-box"></div>
<svg style="left:559px;top:607px" width="14" height="14" viewBox="0 0 14 14"><rect x="0" y="0" width="14" height="14" fill="#c6c6c6"/><path d="M4.2 0.7 H9.6" stroke="#a00000" stroke-width="1.3"/><path d="M0 3.5 H2.6" stroke="#a00000" stroke-width="1.3"/><rect x="1" y="6" width="2" height="2" fill="#e0a0a0"/><circle cx="11.9" cy="1.9" r="1.8" fill="#000a96"/><path d="M5.4 3 L11 2.4 L12.3 4.2 L9.4 9.9 L6.6 9.7 Z" fill="#000a96"/><path d="M6 3.6 L2.6 6 L1.6 10.2 M10.8 4.4 L12.2 8.8 M7.6 9.3 L4 10.6 L1.6 10.8 M8.8 9.6 L7.4 12.6 L9.4 13.2" fill="none" stroke="#000a96" stroke-width="1.9"/></svg>
<div style="left:676px;top:604px;width:249px;height:19px;background:#fff"></div>
<div style="left:925px;top:604px;width:1px;height:20px;background:repeating-linear-gradient(#b8b8b8 0 1px,#ffffff 1px 2px)"></div>
<div class="t" style="left:678px;top:606px;transform:scaleX(0.9545);transform-origin:1px 0;">XHT</div>
<div style="left:926px;top:604px;width:100px;height:20px;background:#ffffff"></div>
<div style="left:926px;top:605px;width:98px;height:18px;background:linear-gradient(#f4f4f4,#e9e9e9);border-right:2px solid #d8d8d8;border-bottom:2px solid #dadada;box-sizing:border-box"></div>
<svg style="left:928px;top:607px" width="14" height="14" viewBox="0 0 14 14"><rect x="1.5" y="1.5" width="12" height="12" rx="2" fill="#909090" opacity="0.35"/><rect x="0.6" y="0.8" width="11.6" height="11.6" rx="2" fill="#ececec" stroke="#acacac" stroke-width="1.1"/><path d="M1.6 1.6 H11.4" stroke="#a0a0a0" stroke-width="1.6"/><path d="M3.8 4.6 V8.6 M6 4.6 H8.8 V6.6 H6 V8.6 H9" fill="none" stroke="#c8c8c8" stroke-width="1.2"/></svg>
<div style="left:1026px;top:604px;width:104px;height:19px;background:#fff"></div>
<div style="left:1130px;top:604px;width:1px;height:20px;background:repeating-linear-gradient(#b8b8b8 0 1px,#ffffff 1px 2px)"></div>
<div class="t" style="left:1029px;top:606px;transform:scaleX(0.9286);transform-origin:1px 0;">YARD46</div>
<div style="left:1131px;top:604px;width:114px;height:19px;background:#fff"></div>
<div style="left:1245px;top:604px;width:1px;height:20px;background:repeating-linear-gradient(#b8b8b8 0 1px,#ffffff 1px 2px)"></div>
<div class="t" style="left:1133px;top:606px;">0</div>
<div style="left:1246px;top:604px;width:99px;height:19px;background:#f0f0f0"></div>
<div style="left:1345px;top:604px;width:1px;height:20px;background:repeating-linear-gradient(#b8b8b8 0 1px,#ffffff 1px 2px)"></div>
<svg style="left:1289px;top:607px" width="14" height="14" viewBox="0 0 14 14"><rect x="0.5" y="0.5" width="12" height="12" fill="#fff" stroke="#bdbdbd"/><path d="M2.4 6.4 L5.2 9.2 L10.6 3.2" fill="none" stroke="#b0b0b0" stroke-width="1.3"/></svg>
<div style="left:1346px;top:604px;width:87px;height:19px;background:#fff"></div>
<div class="t" style="left:1350px;top:606px;transform:scaleX(0.9200);transform-origin:0px 0;width:90.2px;overflow:hidden;">TURNPIKE YARD OFFICE</div>
<div style="left:557px;top:623px;width:877px;height:1px;background:repeating-linear-gradient(to right,#b8b8b8 0 1px,#ffffff 1px 2px)"></div>
<div style="left:557px;top:624px;width:877px;height:1px;background:#f8fafc"></div>
<svg style="left:505px;top:631px" width="9" height="9" viewBox="0 0 9 9"><rect x="0.5" y="0.5" width="8" height="8" rx="1.5" fill="#fafafa" stroke="#8c8c8c"/><path d="M2 4.5 H7 M4.5 2 V7" stroke="#34508c" stroke-width="1.1"/></svg>
<div style="left:515px;top:635px;width:4px;height:1px;background:repeating-linear-gradient(to right,#a0a0a0 0 1px,transparent 1px 2px)"></div>
<div style="left:520px;top:625px;width:36px;height:20px;background:linear-gradient(to right,#fdfdfd,#f0f0f0 35%,#cdcdcd);border-bottom:2px solid #c8c8c8;box-sizing:border-box"></div>
<div class="t" style="left:524px;top:629px;">2</div>
<svg style="left:548px;top:630px" width="6" height="10" viewBox="0 0 6 10"><path d="M0.5 0.5 L5.5 5 L0.5 9.5 Z" fill="#000"/></svg>
<div style="left:557px;top:625px;width:119px;height:20px;background:#dfe6ec"></div>
<div style="left:557px;top:627px;width:117px;height:17px;background:linear-gradient(#f4f4f4,#e9e9e9);border-right:2px solid #d8d8d8;border-bottom:2px solid #dadada;box-sizing:border-box"></div>
<div style="left:557px;top:625px;width:119px;height:1px;background:repeating-linear-gradient(to right,#98b4d8 0 1px,transparent 1px 2px)"></div>
<div style="left:557px;top:625px;width:1px;height:20px;background:repeating-linear-gradient(#98b4d8 0 1px,transparent 1px 2px)"></div>
<div style="left:676px;top:626px;width:249px;height:18px;background:#b0c4de"></div>
<div style="left:925px;top:625px;width:1px;height:20px;background:repeating-linear-gradient(#c8b89a 0 1px,#b0c4de 1px 2px)"></div>
<div class="t" style="left:678px;top:627px;transform:scaleX(0.9545);transform-origin:1px 0;">XDT</div>
<div style="left:926px;top:625px;width:100px;height:20px;background:#dfe6ec"></div>
<div style="left:926px;top:627px;width:98px;height:17px;background:linear-gradient(#f4f4f4,#e9e9e9);border-right:2px solid #d8d8d8;border-bottom:2px solid #dadada;box-sizing:border-box"></div>
<svg style="left:928px;top:628px" width="14" height="14" viewBox="0 0 14 14"><rect x="1.5" y="1.5" width="12" height="12" rx="2" fill="#909090" opacity="0.35"/><rect x="0.6" y="0.8" width="11.6" height="11.6" rx="2" fill="#ececec" stroke="#acacac" stroke-width="1.1"/><path d="M1.6 1.6 H11.4" stroke="#a0a0a0" stroke-width="1.6"/><path d="M3.8 4.6 V8.6 M6 4.6 H8.8 V6.6 H6 V8.6 H9" fill="none" stroke="#c8c8c8" stroke-width="1.2"/></svg>
<div style="left:1026px;top:626px;width:104px;height:18px;background:#b0c4de"></div>
<div style="left:1130px;top:625px;width:1px;height:20px;background:repeating-linear-gradient(#c8b89a 0 1px,#b0c4de 1px 2px)"></div>
<div class="t" style="left:1029px;top:627px;transform:scaleX(0.9286);transform-origin:1px 0;">YARD10</div>
<div style="left:1131px;top:626px;width:114px;height:18px;background:#b0c4de"></div>
<div style="left:1245px;top:625px;width:1px;height:20px;background:repeating-linear-gradient(#c8b89a 0 1px,#b0c4de 1px 2px)"></div>
<div class="t" style="left:1133px;top:627px;">0</div>
<div style="left:1246px;top:626px;width:99px;height:18px;background:#d3d3d3"></div>
<div style="left:1345px;top:625px;width:1px;height:20px;background:repeating-linear-gradient(#b8b8b8 0 1px,#ffffff 1px 2px)"></div>
<svg style="left:1289px;top:628px" width="14" height="14" viewBox="0 0 14 14"><rect x="0" y="0" width="12" height="12" fill="#fff"/><path d="M2 6.2 L4.8 9 L10.4 3" fill="none" stroke="#b0b0b0" stroke-width="1.3"/></svg>
<div style="left:1346px;top:626px;width:87px;height:18px;background:#b0c4de"></div>
<div class="t" style="left:1350px;top:627px;transform:scaleX(0.9200);transform-origin:0px 0;width:90.2px;overflow:hidden;">TURNPIKE YARD OFFICE</div>
<div style="left:557px;top:644px;width:877px;height:1px;background:repeating-linear-gradient(to right,#c8b89a 0 1px,#dfe6ec 1px 2px)"></div>
<div style="left:557px;top:625px;width:877px;height:1px;background:repeating-linear-gradient(to right,#b8b8b8 0 1px,#ffffff 1px 2px)"></div>
<div style="left:500px;top:645px;width:934px;height:9px;background:linear-gradient(to right,#e9e9e9,#c9c9c9)"></div>
<div style="left:500px;top:654px;width:934px;height:1px;background:#fafafa"></div>
<div style="left:500px;top:655px;width:934px;height:16px;background:#f0f0f0"></div>
<div style="left:517px;top:655px;width:156px;height:16px;background:#cbcbcb"></div>
<svg style="left:505px;top:659px" width="7" height="8" viewBox="0 0 7 8"><path d="M5.6 0.6 L1.6 4 L5.6 7.4" fill="none" stroke="#3c3c3c" stroke-width="2"/></svg>
<svg style="left:1422px;top:659px" width="7" height="8" viewBox="0 0 7 8"><path d="M1.4 0.6 L5.4 4 L1.4 7.4" fill="none" stroke="#3c3c3c" stroke-width="2"/></svg>
</body></html>
